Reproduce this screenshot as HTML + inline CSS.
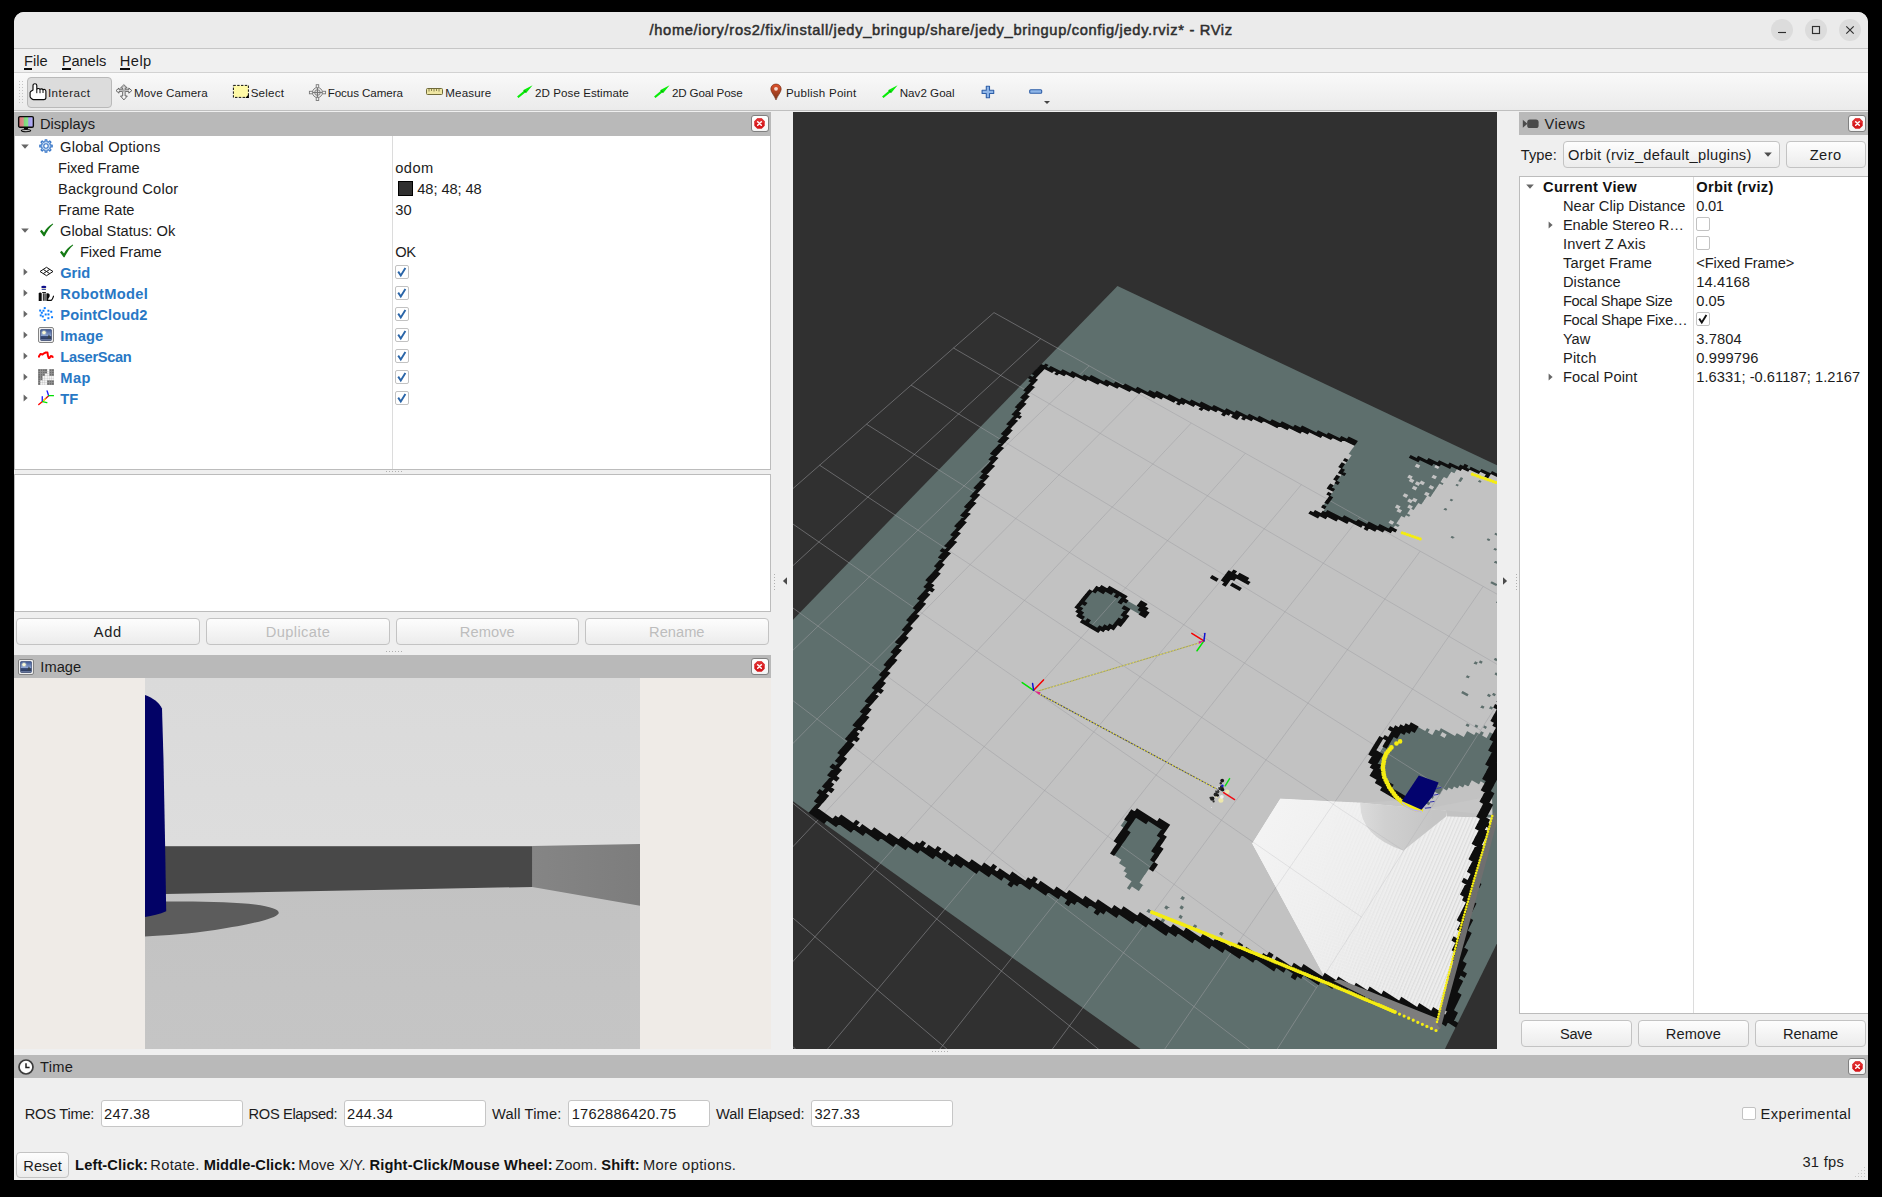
<!DOCTYPE html>
<html lang="en"><head><meta charset="utf-8"><title>RViz</title><style>
html,body{margin:0;padding:0;background:#000;}
body{width:1882px;height:1197px;position:relative;overflow:hidden;font-family:'Liberation Sans', sans-serif;color:#1c1c1c;}
div,span.t,svg{position:absolute;box-sizing:border-box;}
span.t{white-space:pre;line-height:1;}
.btn{border:1px solid #c3c3c3;border-radius:4px;background:linear-gradient(#fdfdfd,#ececec);}
.inp{border:1px solid #c6c6c6;border-radius:3px;background:#fff;}
.hdr{background:#b9b9b9;}
.cb{border:1px solid #c2c2c2;border-radius:2px;background:#fff;}
.xb{border:1px solid #b5b5b5;border-radius:3px;background:linear-gradient(#fcfcfc,#e9e9e9);}
</style></head>
<body>
<div style="left:14px;top:12px;width:1854px;height:1168px;background:#efefef;border-radius:10px 10px 0 0;"></div>
<div style="left:14px;top:12px;width:1854px;height:36px;background:#ebebeb;border-radius:10px 10px 0 0;border-bottom:1px solid #c6c6c6;height:37px;"></div>
<span class="t" style="left:649.50px;top:23.00px;font-size:14.67px;letter-spacing:0.669px;color:#2e2e2e;-webkit-text-stroke:.5px #2e2e2e;">/home/iory/ros2/fix/install/jedy_bringup/share/jedy_bringup/config/jedy.rviz* - RViz</span>
<div style="left:1771px;top:19px;width:22px;height:22px;background:#dcdcdc;border-radius:11px;"></div>
<div style="left:1805px;top:19px;width:22px;height:22px;background:#dcdcdc;border-radius:11px;"></div>
<div style="left:1839px;top:19px;width:22px;height:22px;background:#dcdcdc;border-radius:11px;"></div>
<svg style="left:1770px;top:18px" width="96" height="24" viewBox="1770 18 96 24" fill="none" stroke="#2e2e2e" stroke-width="1.15"><path d="M1778 32.5H1786"/><rect x="1812.5" y="26.5" width="7" height="7"/><path d="M1846.3 26.3L1853.7 33.7M1853.7 26.3L1846.3 33.7"/></svg>
<div style="left:14px;top:49px;width:1854px;height:24px;background:#f0f0f0;border-bottom:1px solid #d2d2d2;"></div>
<span class="t" style="left:23.90px;top:54.00px;font-size:14.67px;letter-spacing:0.069px;">File</span>
<span class="t" style="left:61.70px;top:54.00px;font-size:14.67px;letter-spacing:-0.055px;">Panels</span>
<span class="t" style="left:119.80px;top:54.00px;font-size:14.67px;letter-spacing:0.436px;">Help</span>
<div style="left:24.3px;top:68px;width:7.699999999999999px;height:2px;background:#0c0c0c;"></div>
<div style="left:62.2px;top:68px;width:8.799999999999997px;height:2px;background:#0c0c0c;"></div>
<div style="left:120.3px;top:68px;width:9.700000000000003px;height:2px;background:#0c0c0c;"></div>
<div style="left:14px;top:73px;width:1854px;height:38px;background:linear-gradient(#f9f9f9,#ebebeb);border-bottom:1px solid #bfbfbf;"></div>
<svg style="left:18px;top:80px" width="8" height="26" viewBox="0 0 8 26" fill="#c4c4c4"><rect x="1" y="1" width="1" height="1"/><rect x="4" y="1" width="1" height="1"/><rect x="1" y="4" width="1" height="1"/><rect x="4" y="4" width="1" height="1"/><rect x="1" y="7" width="1" height="1"/><rect x="4" y="7" width="1" height="1"/><rect x="1" y="10" width="1" height="1"/><rect x="4" y="10" width="1" height="1"/><rect x="1" y="13" width="1" height="1"/><rect x="4" y="13" width="1" height="1"/><rect x="1" y="16" width="1" height="1"/><rect x="4" y="16" width="1" height="1"/><rect x="1" y="19" width="1" height="1"/><rect x="4" y="19" width="1" height="1"/><rect x="1" y="22" width="1" height="1"/><rect x="4" y="22" width="1" height="1"/></svg>
<div style="left:27px;top:77px;width:85px;height:31px;background:#dcdcdc;border:1px solid #b9b9b9;border-radius:4px;"></div>
<span class="t" style="left:47.90px;top:87.00px;font-size:11.6px;letter-spacing:0.491px;">Interact</span>
<span class="t" style="left:134.00px;top:87.00px;font-size:11.6px;letter-spacing:0.090px;">Move Camera</span>
<span class="t" style="left:250.70px;top:87.00px;font-size:11.6px;letter-spacing:0.194px;">Select</span>
<span class="t" style="left:327.70px;top:87.00px;font-size:11.6px;letter-spacing:-0.078px;">Focus Camera</span>
<span class="t" style="left:445.20px;top:87.00px;font-size:11.6px;letter-spacing:0.170px;">Measure</span>
<span class="t" style="left:535.10px;top:87.00px;font-size:11.6px;letter-spacing:0.050px;">2D Pose Estimate</span>
<span class="t" style="left:671.90px;top:87.00px;font-size:11.6px;letter-spacing:-0.132px;">2D Goal Pose</span>
<span class="t" style="left:785.90px;top:87.00px;font-size:11.6px;letter-spacing:0.225px;">Publish Point</span>
<span class="t" style="left:899.70px;top:87.00px;font-size:11.6px;letter-spacing:0.024px;">Nav2 Goal</span>
<svg style="left:29px;top:83px" width="18" height="18" viewBox="0 0 18 18"><path d="M4 7V2.400C4 .2 7.800 .2 7.800 2.400V6C8.600 5.200 10.400 5.300 11 6.400C11.800 5.600 13.400 5.800 14 6.800C14.900 6 16.900 6.400 16.900 8.400V14.400C16.900 15.800 16 16.600 14.800 16.600H4.600C3.400 16.600 1.100 14.800 1.100 13.400V9.600C1.100 8.800 2.800 7.600 4 7z" fill="#fff" stroke="#0a0a0a" stroke-width="1.150" stroke-linejoin="round"/><path d="M7.800 6v4.200M11 6.600v3.600M14 7v3" stroke="#0a0a0a" stroke-width="1" fill="none"/></svg>
<svg style="left:115px;top:83px" width="18" height="18" viewBox="0 0 18 18"><path d="M8.900 1.700L12.300 5H10.100V6.800H13.800V5L16.800 7.600 13.800 10.200V8.400H10.100V13H12.300L8.900 16.900 5.500 13H7.700V8.400H4V10.200L1 7.600 4 5V6.800H7.700V5H5.500z" fill="#f6f6f6" stroke="#5c5c5c" stroke-width=".95" stroke-linejoin="round"/><circle cx="8.900" cy="7.600" r="1.700" fill="#b0b0b0"/><path d="M6.600 4.300q2.300-1.200 4.600 0" stroke="#8a8a8a" stroke-width=".8" fill="none"/></svg>
<svg style="left:232px;top:84px" width="18" height="15" viewBox="0 0 18 15"><rect x="1.400" y="1.400" width="15" height="12" fill="#fffaa6" stroke="#111" stroke-width="1" stroke-dasharray="2.400 1.400"/><path d="M16.900 13.900h-3.600l3.600-3.600z" fill="#000"/></svg>
<svg style="left:308px;top:83px" width="19" height="19" viewBox="0 0 19 19" fill="#f4f4f4" stroke="#777" stroke-width=".9"><rect x="8.200" y="1.700" width="2.500" height="15.800"/><rect x="1.400" y="8.300" width="16.200" height="2.500"/><circle cx="9.450" cy="9.550" r="5" fill="#ececec"/><circle cx="9.450" cy="9.550" r="2.800" fill="#e2e2e2"/><path d="M9.450 4.700v9.700M4.600 9.550h9.700" fill="none" stroke-width="1.100"/></svg>
<svg style="left:426px;top:88px" width="18" height="8" viewBox="0 0 18 8"><rect x=".5" y=".5" width="16" height="6" rx="1" fill="#efe6a3" stroke="#6f6a3a"/><path d="M3 1v2.500M5.500 1v2M8 1v2.500M10.500 1v2M13 1v2.500" stroke="#6f6a3a" stroke-width=".8"/></svg>
<svg style="left:516px;top:84px" width="18" height="16" viewBox="0 0 18 16"><path d="M1.100 12.500L7.900 6.800 7 6.200 16.600 1.200 10.200 9 9.300 8.400 2.500 14.100z" fill="#08ec08"/><path d="M7.400 6.500L8.600 6.400 10.100 8.100 9.900 8.800z" fill="#0a6e0a" opacity=".85"/></svg>
<svg style="left:652.8px;top:84px" width="18" height="16" viewBox="0 0 18 16"><path d="M1.100 12.500L7.900 6.800 7 6.200 16.600 1.200 10.200 9 9.300 8.400 2.500 14.100z" fill="#08ec08"/><path d="M7.400 6.500L8.600 6.400 10.100 8.100 9.900 8.800z" fill="#0a6e0a" opacity=".85"/></svg>
<svg style="left:880.8px;top:84px" width="18" height="16" viewBox="0 0 18 16"><path d="M1.100 12.500L7.900 6.800 7 6.200 16.600 1.200 10.200 9 9.300 8.400 2.500 14.100z" fill="#08ec08"/><path d="M7.400 6.500L8.600 6.400 10.100 8.100 9.900 8.800z" fill="#0a6e0a" opacity=".85"/></svg>
<svg style="left:769px;top:83px" width="14" height="18" viewBox="0 0 14 18"><defs><linearGradient id="pg" x1="0" y1="0" x2="0" y2="1"><stop offset="0" stop-color="#e0522c"/><stop offset="1" stop-color="#7a3418"/></linearGradient></defs><path d="M7 1C3.900 1 1.800 3.300 1.800 6.100 1.800 9.300 5.400 12.500 7 17c1.600-4.500 5.200-7.700 5.200-10.900C12.200 3.300 10.100 1 7 1z" fill="url(#pg)" stroke="#6a2a12" stroke-width=".6"/><circle cx="7" cy="5.800" r="1.900" fill="#f6d9cf"/></svg>
<svg style="left:980px;top:85px" width="16" height="15" viewBox="0 0 16 15"><path d="M6.300 1.300h3.200v4h4.200v3.200H9.500v4.200H6.300V8.500H2.100V5.300h4.200z" fill="#8fb6e8" stroke="#2f5fa8" stroke-width="1.100" stroke-linejoin="round"/></svg>
<svg style="left:1028px;top:88px" width="16" height="8" viewBox="0 0 16 8"><rect x="1.700" y="1.700" width="12" height="3.600" rx="1" fill="#8fb6e8" stroke="#2f5fa8" stroke-width="1.100"/></svg>
<svg style="left:1043px;top:100px" width="8" height="5" viewBox="0 0 8 5"><path d="M1 1h6L4 4z" fill="#444"/></svg>
<div class="hdr" style="left:14px;top:112px;width:757px;height:24px;"></div>
<svg style="left:17px;top:115px" width="18" height="18" viewBox="0 0 18 18"><defs><linearGradient id="dg" x1="0" x2="1"><stop offset="0" stop-color="#d87474"/><stop offset=".32" stop-color="#dc8c8c"/><stop offset=".36" stop-color="#78d878"/><stop offset=".64" stop-color="#8ee08e"/><stop offset=".68" stop-color="#a29af0"/><stop offset="1" stop-color="#b8b4f6"/></linearGradient></defs><rect x="1.650" y="1.650" width="14.700" height="10.600" rx="1.300" fill="url(#dg)" stroke="#0a0a0a" stroke-width="1.400"/><path d="M7.300 12.600h3.400l.6 2h-4.600z" fill="#0a0a0a"/><ellipse cx="9" cy="15.600" rx="4.700" ry="1.150" fill="#d0d0d0" stroke="#0a0a0a" stroke-width="1.100"/></svg>
<span class="t" style="left:40.00px;top:117.00px;font-size:14.67px;letter-spacing:-0.036px;">Displays</span>
<div style="left:750.5px;top:115px;width:18px;height:17px;border:1px solid #808080;border-radius:3px;background:linear-gradient(#ffffff,#f4f4f4);"></div>
<svg style="left:754.0px;top:117.7px" width="11" height="11" viewBox="0 0 11 11"><path d="M3.300 .3h4.400l3 3v4.400l-3 3H3.300l-3-3V3.300z" fill="#d6181c"/><path d="M3.300 .3h4.400l3 3v1.600H.3V3.300z" fill="#e84040" opacity=".55"/><path d="M3.700 3.700l3.600 3.600M7.300 3.700L3.700 7.300" stroke="#fff" stroke-width="1.500" stroke-linecap="round"/></svg>
<div style="left:14px;top:136px;width:757px;height:334px;background:#fff;border:1px solid #bcbcbc;border-top:none;"></div>
<div style="left:392px;top:136px;width:1px;height:333px;background:#dcdcdc;"></div>
<svg style="left:21px;top:144.0px" width="8" height="5" viewBox="0 0 8 5"><path d="M.2 .5h7.600L4 4.700z" fill="#666"/></svg>
<svg style="left:37.500px;top:137.500px" width="16" height="16" viewBox="0 0 16 16"><path d="M7.09 3.59L7.11 1.76L8.89 1.76L8.91 3.59L10.47 4.24L11.78 2.96L13.04 4.22L11.76 5.53L12.41 7.09L14.24 7.11L14.24 8.89L12.41 8.91L11.76 10.47L13.04 11.78L11.78 13.04L10.47 11.76L8.91 12.41L8.89 14.24L7.11 14.24L7.09 12.41L5.53 11.76L4.22 13.04L2.96 11.78L4.24 10.47L3.59 8.91L1.76 8.89L1.76 7.11L3.59 7.09L4.24 5.53L2.96 4.22L4.22 2.96L5.53 4.24z" fill="#c6daf2" stroke="#3a78c8" stroke-width="1.150" stroke-linejoin="round"/><circle cx="8" cy="8" r="2.200" fill="#fff" stroke="#3a78c8" stroke-width="1.100"/></svg>
<span class="t" style="left:60.00px;top:140.00px;font-size:14.67px;letter-spacing:0.253px;">Global Options</span>
<span class="t" style="left:58.00px;top:161.00px;font-size:14.67px;letter-spacing:-0.070px;">Fixed Frame</span>
<span class="t" style="left:58.00px;top:182.00px;font-size:14.67px;letter-spacing:0.186px;">Background Color</span>
<span class="t" style="left:58.00px;top:203.00px;font-size:14.67px;letter-spacing:-0.097px;">Frame Rate</span>
<svg style="left:21px;top:228.0px" width="8" height="5" viewBox="0 0 8 5"><path d="M.2 .5h7.600L4 4.700z" fill="#666"/></svg>
<svg style="left:38.5px;top:223px" width="15" height="14" viewBox="0 0 15 14"><path d="M1 8.200L2.700 6.700 5 9.400C7.300 5.600 10 2.700 13.800 .6L14.200 1.200C10.600 4.200 8 8.200 5.600 13.200H4.600z" fill="#147a14"/></svg>
<svg style="left:58.8px;top:244px" width="15" height="14" viewBox="0 0 15 14"><path d="M1 8.200L2.700 6.700 5 9.400C7.300 5.600 10 2.700 13.800 .6L14.200 1.200C10.600 4.200 8 8.200 5.600 13.200H4.600z" fill="#147a14"/></svg>
<span class="t" style="left:60.00px;top:224.00px;font-size:14.67px;letter-spacing:0.025px;">Global Status: Ok</span>
<span class="t" style="left:79.90px;top:245.00px;font-size:14.67px;letter-spacing:-0.061px;">Fixed Frame</span>
<span class="t" style="left:60.30px;top:266.00px;font-size:14.67px;letter-spacing:-0.110px;font-weight:700;color:#2878c5;">Grid</span>
<svg style="left:22.7px;top:268px" width="5" height="8" viewBox="0 0 5 8"><path d="M.6 .4v7.200L4.600 4z" fill="#666"/></svg>
<div class="cb" style="left:395.3px;top:265.2px;width:13.5px;height:13.5px;"></div>
<svg style="left:395.3px;top:265.2px" width="14" height="14" viewBox="0 0 14 14"><path d="M3.200 6.600L5.800 10.500 10.400 3.100" fill="none" stroke="#2a65a8" stroke-width="1.900" stroke-linejoin="miter"/></svg>
<span class="t" style="left:60.30px;top:287.00px;font-size:14.67px;letter-spacing:0.323px;font-weight:700;color:#2878c5;">RobotModel</span>
<svg style="left:22.7px;top:289px" width="5" height="8" viewBox="0 0 5 8"><path d="M.6 .4v7.200L4.600 4z" fill="#666"/></svg>
<div class="cb" style="left:395.3px;top:286.2px;width:13.5px;height:13.5px;"></div>
<svg style="left:395.3px;top:286.2px" width="14" height="14" viewBox="0 0 14 14"><path d="M3.200 6.600L5.800 10.500 10.400 3.100" fill="none" stroke="#2a65a8" stroke-width="1.900" stroke-linejoin="miter"/></svg>
<span class="t" style="left:60.30px;top:308.00px;font-size:14.67px;letter-spacing:0.081px;font-weight:700;color:#2878c5;">PointCloud2</span>
<svg style="left:22.7px;top:310px" width="5" height="8" viewBox="0 0 5 8"><path d="M.6 .4v7.200L4.600 4z" fill="#666"/></svg>
<div class="cb" style="left:395.3px;top:307.2px;width:13.5px;height:13.5px;"></div>
<svg style="left:395.3px;top:307.2px" width="14" height="14" viewBox="0 0 14 14"><path d="M3.200 6.600L5.800 10.500 10.400 3.100" fill="none" stroke="#2a65a8" stroke-width="1.900" stroke-linejoin="miter"/></svg>
<span class="t" style="left:60.30px;top:329.00px;font-size:14.67px;letter-spacing:0.148px;font-weight:700;color:#2878c5;">Image</span>
<svg style="left:22.7px;top:331px" width="5" height="8" viewBox="0 0 5 8"><path d="M.6 .4v7.200L4.600 4z" fill="#666"/></svg>
<div class="cb" style="left:395.3px;top:328.2px;width:13.5px;height:13.5px;"></div>
<svg style="left:395.3px;top:328.2px" width="14" height="14" viewBox="0 0 14 14"><path d="M3.200 6.600L5.800 10.500 10.400 3.100" fill="none" stroke="#2a65a8" stroke-width="1.900" stroke-linejoin="miter"/></svg>
<span class="t" style="left:60.30px;top:350.00px;font-size:14.67px;letter-spacing:-0.327px;font-weight:700;color:#2878c5;">LaserScan</span>
<svg style="left:22.7px;top:352px" width="5" height="8" viewBox="0 0 5 8"><path d="M.6 .4v7.200L4.600 4z" fill="#666"/></svg>
<div class="cb" style="left:395.3px;top:349.2px;width:13.5px;height:13.5px;"></div>
<svg style="left:395.3px;top:349.2px" width="14" height="14" viewBox="0 0 14 14"><path d="M3.200 6.600L5.800 10.500 10.400 3.100" fill="none" stroke="#2a65a8" stroke-width="1.900" stroke-linejoin="miter"/></svg>
<span class="t" style="left:60.30px;top:371.00px;font-size:14.67px;letter-spacing:0.463px;font-weight:700;color:#2878c5;">Map</span>
<svg style="left:22.7px;top:373px" width="5" height="8" viewBox="0 0 5 8"><path d="M.6 .4v7.200L4.600 4z" fill="#666"/></svg>
<div class="cb" style="left:395.3px;top:370.2px;width:13.5px;height:13.5px;"></div>
<svg style="left:395.3px;top:370.2px" width="14" height="14" viewBox="0 0 14 14"><path d="M3.200 6.600L5.800 10.500 10.400 3.100" fill="none" stroke="#2a65a8" stroke-width="1.900" stroke-linejoin="miter"/></svg>
<span class="t" style="left:60.30px;top:392.00px;font-size:14.67px;letter-spacing:0.097px;font-weight:700;color:#2878c5;">TF</span>
<svg style="left:22.7px;top:394px" width="5" height="8" viewBox="0 0 5 8"><path d="M.6 .4v7.200L4.600 4z" fill="#666"/></svg>
<div class="cb" style="left:395.3px;top:391.2px;width:13.5px;height:13.5px;"></div>
<svg style="left:395.3px;top:391.2px" width="14" height="14" viewBox="0 0 14 14"><path d="M3.200 6.600L5.800 10.500 10.400 3.100" fill="none" stroke="#2a65a8" stroke-width="1.900" stroke-linejoin="miter"/></svg>
<span class="t" style="left:395.20px;top:161.00px;font-size:14.67px;letter-spacing:0.457px;">odom</span>
<div style="left:398px;top:181px;width:15px;height:15px;background:#303030;border:1px solid #000;"></div>
<span class="t" style="left:417.30px;top:182.00px;font-size:14.67px;letter-spacing:-0.080px;">48; 48; 48</span>
<span class="t" style="left:395.20px;top:203.00px;font-size:14.67px;letter-spacing:0.144px;">30</span>
<span class="t" style="left:395.20px;top:245.00px;font-size:14.67px;letter-spacing:-0.294px;">OK</span>
<svg style="left:38px;top:264px" width="16" height="16" viewBox="0 0 16 16"><g fill="none" stroke="#111" stroke-width="1" stroke-linejoin="round"><path d="M2 7.500L8.500 3.300 15 7.500 8.500 11.700z"/><path d="M5.250 5.400l6.500 4.200M11.750 5.400L5.250 9.600"/></g></svg>
<svg style="left:38px;top:285px" width="16" height="16" viewBox="0 0 16 16"><ellipse cx="5.800" cy="2" rx="2.600" ry="1.300" fill="#10108c"/><rect x="3.500" y="3.100" width="4.600" height=".8" fill="#efe9c4"/><rect x="3.700" y="3.900" width="4.200" height=".9" fill="#1c2c8c"/><rect x="4.200" y="7" width="3.700" height="1" fill="#1e1e1e"/><path d="M.7 8.600Q1 7.200 2.600 7.400L3.700 8.300V15.900H.7z" fill="#0a0a0a"/><rect x="4.700" y="8.300" width="2" height="7.500" fill="#3c3c3c"/><rect x="6.700" y="8.300" width="1.900" height="7.500" fill="#6a6a6a"/><rect x="4.300" y="8.300" width=".5" height="7.500" fill="#fff"/><path d="M8.600 8.700C10.400 7.700 12 9 11.700 11C11.500 12.500 10.300 13.200 10.100 14.400L10.600 15.900H8.600z" fill="#0a0a0a"/><path d="M9.500 15.400H13C14.200 15.300 14.700 13.600 15.500 11.200" fill="none" stroke="#0a0a0a" stroke-width="1.200" stroke-linecap="round"/></svg>
<svg style="left:38px;top:306px" width="16" height="16" viewBox="0 0 17.500 16.500"><rect x="6.3" y="0.7" width="2.150" height="2.150" fill="#0a7cff"/><rect x="1.3" y="3.4" width="2.150" height="2.150" fill="#0a7cff"/><rect x="4.9" y="3.6" width="2.150" height="2.150" fill="#0a7cff"/><rect x="10.3" y="3.6" width="2.150" height="2.150" fill="#0a7cff"/><rect x="13.4" y="4.7" width="2.150" height="2.150" fill="#0a7cff"/><rect x="3.1" y="5.8" width="2.150" height="2.150" fill="#0a7cff"/><rect x="7.3" y="7.7" width="2.150" height="2.150" fill="#0a7cff"/><rect x="10.4" y="7.6" width="2.150" height="2.150" fill="#0a7cff"/><rect x="1.9" y="8.7" width="2.150" height="2.150" fill="#0a7cff"/><rect x="4.2" y="9.9" width="2.150" height="2.150" fill="#0a7cff"/><rect x="14.3" y="10.7" width="2.150" height="2.150" fill="#0a7cff"/><rect x="10.3" y="11.8" width="2.150" height="2.150" fill="#0a7cff"/><rect x="6.2" y="13.8" width="2.150" height="2.150" fill="#0a7cff"/></svg>
<svg style="left:38px;top:327px" width="16" height="16" viewBox="0 0 16 16"><rect x=".6" y=".6" width="14.800" height="14.800" rx="1.300" fill="#fdfdfd" stroke="#777" stroke-width="1"/><defs><linearGradient id="ig" x1="0" y1="0" x2="0" y2="1"><stop offset="0" stop-color="#3a5490"/><stop offset=".58" stop-color="#90a8d4"/><stop offset=".62" stop-color="#3c507c"/><stop offset=".85" stop-color="#2c3c62"/><stop offset=".9" stop-color="#6a7aa0"/><stop offset="1" stop-color="#2c3c62"/></linearGradient></defs><rect x="2.500" y="2.500" width="11" height="11" rx=".8" fill="url(#ig)" stroke="#2a3a66" stroke-width=".6"/><circle cx="6" cy="5.600" r="1.700" fill="#fdfbd8"/><circle cx="6" cy="5.600" r="2.500" fill="#fdfbd8" opacity=".35"/><path d="M9.600 10.600l1.300-3.400 1.700 3.400.4.800h-3.800z" fill="#39434a"/></svg>
<svg style="left:38px;top:348px" width="16" height="16" viewBox="0 0 16.500 14"><path d="M1 8.600V7.200l1.700-2.400 2 .6 1.500-1.200L8 3.400h1.800l.4 3.200.9 2.600.8-.2 1.300-2 1.700.4.300 1.600" fill="none" stroke="#ff0000" stroke-width="2" stroke-linejoin="round"/></svg>
<svg style="left:38px;top:369px" width="16" height="16" viewBox="0 0 16 16"><rect x="0.15" y="0.15" width="2.250" height="2.250" fill="#6e6e6e" stroke="#8c8c8c" stroke-width=".250" stroke-opacity=".5"/><rect x="2.40" y="0.15" width="2.250" height="2.250" fill="#6e6e6e" stroke="#8c8c8c" stroke-width=".250" stroke-opacity=".5"/><rect x="4.65" y="0.15" width="2.250" height="2.250" fill="#6e6e6e" stroke="#8c8c8c" stroke-width=".250" stroke-opacity=".5"/><rect x="6.90" y="0.15" width="2.250" height="2.250" fill="#6e6e6e" stroke="#8c8c8c" stroke-width=".250" stroke-opacity=".5"/><rect x="9.15" y="0.15" width="2.250" height="2.250" fill="#fff" stroke="#8c8c8c" stroke-width=".250" stroke-opacity=".5"/><rect x="11.40" y="0.15" width="2.250" height="2.250" fill="#6e6e6e" stroke="#8c8c8c" stroke-width=".250" stroke-opacity=".5"/><rect x="13.65" y="0.15" width="2.250" height="2.250" fill="#6e6e6e" stroke="#8c8c8c" stroke-width=".250" stroke-opacity=".5"/><rect x="0.15" y="2.40" width="2.250" height="2.250" fill="#6e6e6e" stroke="#8c8c8c" stroke-width=".250" stroke-opacity=".5"/><rect x="2.40" y="2.40" width="2.250" height="2.250" fill="#6e6e6e" stroke="#8c8c8c" stroke-width=".250" stroke-opacity=".5"/><rect x="4.65" y="2.40" width="2.250" height="2.250" fill="#6e6e6e" stroke="#8c8c8c" stroke-width=".250" stroke-opacity=".5"/><rect x="6.90" y="2.40" width="2.250" height="2.250" fill="#6e6e6e" stroke="#8c8c8c" stroke-width=".250" stroke-opacity=".5"/><rect x="9.15" y="2.40" width="2.250" height="2.250" fill="#f4f4f4" stroke="#8c8c8c" stroke-width=".250" stroke-opacity=".5"/><rect x="11.40" y="2.40" width="2.250" height="2.250" fill="#6e6e6e" stroke="#8c8c8c" stroke-width=".250" stroke-opacity=".5"/><rect x="13.65" y="2.40" width="2.250" height="2.250" fill="#6e6e6e" stroke="#8c8c8c" stroke-width=".250" stroke-opacity=".5"/><rect x="0.15" y="4.65" width="2.250" height="2.250" fill="#6e6e6e" stroke="#8c8c8c" stroke-width=".250" stroke-opacity=".5"/><rect x="2.40" y="4.65" width="2.250" height="2.250" fill="#6e6e6e" stroke="#8c8c8c" stroke-width=".250" stroke-opacity=".5"/><rect x="4.65" y="4.65" width="2.250" height="2.250" fill="#6e6e6e" stroke="#8c8c8c" stroke-width=".250" stroke-opacity=".5"/><rect x="6.90" y="4.65" width="2.250" height="2.250" fill="#f4f4f4" stroke="#8c8c8c" stroke-width=".250" stroke-opacity=".5"/><rect x="9.15" y="4.65" width="2.250" height="2.250" fill="#f4f4f4" stroke="#8c8c8c" stroke-width=".250" stroke-opacity=".5"/><rect x="11.40" y="4.65" width="2.250" height="2.250" fill="#6e6e6e" stroke="#8c8c8c" stroke-width=".250" stroke-opacity=".5"/><rect x="13.65" y="4.65" width="2.250" height="2.250" fill="#6e6e6e" stroke="#8c8c8c" stroke-width=".250" stroke-opacity=".5"/><rect x="0.15" y="6.90" width="2.250" height="2.250" fill="#6e6e6e" stroke="#8c8c8c" stroke-width=".250" stroke-opacity=".5"/><rect x="2.40" y="6.90" width="2.250" height="2.250" fill="#6e6e6e" stroke="#8c8c8c" stroke-width=".250" stroke-opacity=".5"/><rect x="4.65" y="6.90" width="2.250" height="2.250" fill="#f4f4f4" stroke="#8c8c8c" stroke-width=".250" stroke-opacity=".5"/><rect x="6.90" y="6.90" width="2.250" height="2.250" fill="#f4f4f4" stroke="#8c8c8c" stroke-width=".250" stroke-opacity=".5"/><rect x="9.15" y="6.90" width="2.250" height="2.250" fill="#f4f4f4" stroke="#8c8c8c" stroke-width=".250" stroke-opacity=".5"/><rect x="11.40" y="6.90" width="2.250" height="2.250" fill="#f4f4f4" stroke="#8c8c8c" stroke-width=".250" stroke-opacity=".5"/><rect x="13.65" y="6.90" width="2.250" height="2.250" fill="#f4f4f4" stroke="#8c8c8c" stroke-width=".250" stroke-opacity=".5"/><rect x="0.15" y="9.15" width="2.250" height="2.250" fill="#6e6e6e" stroke="#8c8c8c" stroke-width=".250" stroke-opacity=".5"/><rect x="2.40" y="9.15" width="2.250" height="2.250" fill="#6e6e6e" stroke="#8c8c8c" stroke-width=".250" stroke-opacity=".5"/><rect x="4.65" y="9.15" width="2.250" height="2.250" fill="#f4f4f4" stroke="#8c8c8c" stroke-width=".250" stroke-opacity=".5"/><rect x="6.90" y="9.15" width="2.250" height="2.250" fill="#f4f4f4" stroke="#8c8c8c" stroke-width=".250" stroke-opacity=".5"/><rect x="9.15" y="9.15" width="2.250" height="2.250" fill="#f4f4f4" stroke="#8c8c8c" stroke-width=".250" stroke-opacity=".5"/><rect x="11.40" y="9.15" width="2.250" height="2.250" fill="#f4f4f4" stroke="#8c8c8c" stroke-width=".250" stroke-opacity=".5"/><rect x="13.65" y="9.15" width="2.250" height="2.250" fill="#f4f4f4" stroke="#8c8c8c" stroke-width=".250" stroke-opacity=".5"/><rect x="0.15" y="11.40" width="2.250" height="2.250" fill="#6e6e6e" stroke="#8c8c8c" stroke-width=".250" stroke-opacity=".5"/><rect x="2.40" y="11.40" width="2.250" height="2.250" fill="#f4f4f4" stroke="#8c8c8c" stroke-width=".250" stroke-opacity=".5"/><rect x="4.65" y="11.40" width="2.250" height="2.250" fill="#f4f4f4" stroke="#8c8c8c" stroke-width=".250" stroke-opacity=".5"/><rect x="6.90" y="11.40" width="2.250" height="2.250" fill="#f4f4f4" stroke="#8c8c8c" stroke-width=".250" stroke-opacity=".5"/><rect x="9.15" y="11.40" width="2.250" height="2.250" fill="#6e6e6e" stroke="#8c8c8c" stroke-width=".250" stroke-opacity=".5"/><rect x="11.40" y="11.40" width="2.250" height="2.250" fill="#6e6e6e" stroke="#8c8c8c" stroke-width=".250" stroke-opacity=".5"/><rect x="13.65" y="11.40" width="2.250" height="2.250" fill="#6e6e6e" stroke="#8c8c8c" stroke-width=".250" stroke-opacity=".5"/><rect x="0.15" y="13.65" width="2.250" height="2.250" fill="#6e6e6e" stroke="#8c8c8c" stroke-width=".250" stroke-opacity=".5"/><rect x="2.40" y="13.65" width="2.250" height="2.250" fill="#f4f4f4" stroke="#8c8c8c" stroke-width=".250" stroke-opacity=".5"/><rect x="4.65" y="13.65" width="2.250" height="2.250" fill="#f4f4f4" stroke="#8c8c8c" stroke-width=".250" stroke-opacity=".5"/><rect x="6.90" y="13.65" width="2.250" height="2.250" fill="#f4f4f4" stroke="#8c8c8c" stroke-width=".250" stroke-opacity=".5"/><rect x="9.15" y="13.65" width="2.250" height="2.250" fill="#6e6e6e" stroke="#8c8c8c" stroke-width=".250" stroke-opacity=".5"/><rect x="11.40" y="13.65" width="2.250" height="2.250" fill="#6e6e6e" stroke="#8c8c8c" stroke-width=".250" stroke-opacity=".5"/><rect x="13.65" y="13.65" width="2.250" height="2.250" fill="#6e6e6e" stroke="#8c8c8c" stroke-width=".250" stroke-opacity=".5"/></svg>
<svg style="left:38px;top:390px" width="16" height="16" viewBox="0 0 16.500 16"><g fill="none" stroke-width="1.400" stroke-linecap="round"><path d="M.8 14.800L4.600 11.600" stroke="#ff0000"/><path d="M4.600 11.600L11 5.600" stroke="#e01010"/><path d="M5.500 10.800l2-1.800" stroke="#ffe000"/><path d="M4.400 11.200V6.600" stroke="#1a1aff"/><path d="M4.800 11.700l4.300 1.100" stroke="#00e000"/><path d="M11 5.600L9.400 .8" stroke="#1a1aff"/><path d="M11 5.600h5" stroke="#00e000"/></g></svg>
<svg style="left:386px;top:471px" width="18" height="2" viewBox="0 0 18 2" fill="#b0b0b0"><rect x="0" y="0" width="1" height="1"/><rect x="3" y="0" width="1" height="1"/><rect x="6" y="0" width="1" height="1"/><rect x="9" y="0" width="1" height="1"/><rect x="12" y="0" width="1" height="1"/><rect x="15" y="0" width="1" height="1"/></svg>
<div style="left:14px;top:474px;width:757px;height:138px;background:#fff;border:1px solid #bcbcbc;"></div>
<div class="btn" style="left:16px;top:618px;width:184px;height:27px;"></div>
<span class="t" style="left:93.80px;top:625.00px;font-size:14.67px;letter-spacing:0.674px;">Add</span>
<div class="btn" style="left:206px;top:618px;width:184px;height:27px;"></div>
<span class="t" style="left:265.70px;top:625.00px;font-size:14.67px;letter-spacing:0.388px;color:#bdbdbd;">Duplicate</span>
<div class="btn" style="left:396px;top:618px;width:183px;height:27px;"></div>
<span class="t" style="left:459.80px;top:625.00px;font-size:14.67px;letter-spacing:0.070px;color:#bdbdbd;">Remove</span>
<div class="btn" style="left:585px;top:618px;width:184px;height:27px;"></div>
<span class="t" style="left:649.10px;top:625.00px;font-size:14.67px;letter-spacing:-0.001px;color:#bdbdbd;">Rename</span>
<svg style="left:386px;top:651px" width="18" height="2" viewBox="0 0 18 2" fill="#b0b0b0"><rect x="0" y="0" width="1" height="1"/><rect x="3" y="0" width="1" height="1"/><rect x="6" y="0" width="1" height="1"/><rect x="9" y="0" width="1" height="1"/><rect x="12" y="0" width="1" height="1"/><rect x="15" y="0" width="1" height="1"/></svg>
<div class="hdr" style="left:14px;top:655px;width:757px;height:23px;"></div>
<svg style="left:18px;top:659px" width="16" height="16" viewBox="0 0 16 16"><rect x=".6" y=".6" width="14.800" height="14.800" rx="1.300" fill="#fdfdfd" stroke="#777" stroke-width="1"/><defs><linearGradient id="ig2" x1="0" y1="0" x2="0" y2="1"><stop offset="0" stop-color="#3a5490"/><stop offset=".58" stop-color="#90a8d4"/><stop offset=".62" stop-color="#3c507c"/><stop offset=".85" stop-color="#2c3c62"/><stop offset=".9" stop-color="#6a7aa0"/><stop offset="1" stop-color="#2c3c62"/></linearGradient></defs><rect x="2.500" y="2.500" width="11" height="11" rx=".8" fill="url(#ig2)" stroke="#2a3a66" stroke-width=".6"/><circle cx="6" cy="5.600" r="1.700" fill="#fdfbd8"/><circle cx="6" cy="5.600" r="2.500" fill="#fdfbd8" opacity=".35"/><path d="M9.600 10.600l1.300-3.400 1.700 3.400.4.800h-3.800z" fill="#39434a"/></svg>
<span class="t" style="left:40.30px;top:660.00px;font-size:14.67px;letter-spacing:0.033px;">Image</span>
<div style="left:750.5px;top:658px;width:18px;height:17px;border:1px solid #808080;border-radius:3px;background:linear-gradient(#ffffff,#f4f4f4);"></div>
<svg style="left:754.0px;top:660.7px" width="11" height="11" viewBox="0 0 11 11"><path d="M3.300 .3h4.400l3 3v4.400l-3 3H3.300l-3-3V3.300z" fill="#d6181c"/><path d="M3.300 .3h4.400l3 3v1.600H.3V3.300z" fill="#e84040" opacity=".55"/><path d="M3.700 3.700l3.600 3.600M7.300 3.700L3.700 7.300" stroke="#fff" stroke-width="1.500" stroke-linecap="round"/></svg>
<div style="left:14px;top:678px;width:757px;height:371px;background:#efebe7;"></div>
<svg style="left:782px;top:575.500px" width="6" height="10" viewBox="0 0 6 10"><path d="M5 1.200v7.600L.9 5z" fill="#4a4a4a"/></svg>
<svg style="left:774px;top:574px" width="2" height="18" viewBox="0 0 2 18" fill="#b0b0b0"><rect x="0" y="0" width="1" height="1"/><rect x="0" y="3" width="1" height="1"/><rect x="0" y="6" width="1" height="1"/><rect x="0" y="9" width="1" height="1"/><rect x="0" y="12" width="1" height="1"/><rect x="0" y="15" width="1" height="1"/></svg>
<svg style="left:1516px;top:574px" width="2" height="18" viewBox="0 0 2 18" fill="#b0b0b0"><rect x="0" y="0" width="1" height="1"/><rect x="0" y="3" width="1" height="1"/><rect x="0" y="6" width="1" height="1"/><rect x="0" y="9" width="1" height="1"/><rect x="0" y="12" width="1" height="1"/><rect x="0" y="15" width="1" height="1"/></svg>
<svg style="left:1502px;top:575.500px" width="6" height="10" viewBox="0 0 6 10"><path d="M1 1.200v7.600L5.100 5z" fill="#4a4a4a"/></svg>
<svg style="left:932px;top:1051px" width="18" height="2" viewBox="0 0 18 2" fill="#b0b0b0"><rect x="0" y="0" width="1" height="1"/><rect x="3" y="0" width="1" height="1"/><rect x="6" y="0" width="1" height="1"/><rect x="9" y="0" width="1" height="1"/><rect x="12" y="0" width="1" height="1"/><rect x="15" y="0" width="1" height="1"/></svg>
<div class="hdr" style="left:1519px;top:112px;width:349px;height:23px;"></div>
<svg style="left:1522px;top:119px" width="18" height="10" viewBox="0 0 18 10"><path d="M.8 .8L5.400 4.700.8 8.800z" fill="#4a4a4a"/><rect x="5.200" y=".6" width="11.400" height="8.400" rx="2.600" fill="#4a4a4a"/></svg>
<span class="t" style="left:1544.50px;top:117.00px;font-size:14.67px;letter-spacing:0.411px;">Views</span>
<div style="left:1848px;top:115px;width:18px;height:17px;border:1px solid #808080;border-radius:3px;background:linear-gradient(#ffffff,#f4f4f4);"></div>
<svg style="left:1851.5px;top:117.7px" width="11" height="11" viewBox="0 0 11 11"><path d="M3.300 .3h4.400l3 3v4.400l-3 3H3.300l-3-3V3.300z" fill="#d6181c"/><path d="M3.300 .3h4.400l3 3v1.600H.3V3.300z" fill="#e84040" opacity=".55"/><path d="M3.700 3.700l3.600 3.600M7.300 3.700L3.700 7.300" stroke="#fff" stroke-width="1.500" stroke-linecap="round"/></svg>
<span class="t" style="left:1520.80px;top:148.00px;font-size:14.67px;letter-spacing:0.048px;">Type:</span>
<div class="btn" style="left:1563px;top:141px;width:217px;height:27px;"></div>
<span class="t" style="left:1568.10px;top:148.00px;font-size:14.67px;letter-spacing:0.302px;">Orbit (rviz_default_plugins)</span>
<svg style="left:1764.4px;top:152.3px" width="8" height="5" viewBox="0 0 8 5"><path d="M.2 .5h7.600L4 4.700z" fill="#4d4d4d"/></svg>
<div class="btn" style="left:1786px;top:141px;width:80px;height:27px;"></div>
<span class="t" style="left:1809.70px;top:148.00px;font-size:14.67px;letter-spacing:0.465px;">Zero</span>
<div style="left:1519px;top:176px;width:349px;height:838px;background:#fff;border:1px solid #bcbcbc;border-right:none;"></div>
<div style="left:1693px;top:177px;width:1px;height:836px;background:#dcdcdc;"></div>
<svg style="left:1526px;top:183.8px" width="8" height="5" viewBox="0 0 8 5"><path d="M.2 .5h7.600L4 4.700z" fill="#666"/></svg>
<span class="t" style="left:1543.00px;top:180.00px;font-size:14.67px;letter-spacing:0.322px;font-weight:700;color:#111;">Current View</span>
<span class="t" style="left:1696.30px;top:180.00px;font-size:14.67px;letter-spacing:0.266px;font-weight:700;color:#111;">Orbit (rviz)</span>
<span class="t" style="left:1562.90px;top:199.00px;font-size:14.67px;letter-spacing:0.023px;">Near Clip Distance</span>
<span class="t" style="left:1562.90px;top:218.00px;font-size:14.67px;letter-spacing:-0.081px;">Enable Stereo R…</span>
<span class="t" style="left:1562.90px;top:237.00px;font-size:14.67px;letter-spacing:0.166px;">Invert Z Axis</span>
<span class="t" style="left:1562.90px;top:256.00px;font-size:14.67px;letter-spacing:0.179px;">Target Frame</span>
<span class="t" style="left:1562.90px;top:275.00px;font-size:14.67px;letter-spacing:0.121px;">Distance</span>
<span class="t" style="left:1562.90px;top:294.00px;font-size:14.67px;letter-spacing:-0.336px;">Focal Shape Size</span>
<span class="t" style="left:1562.90px;top:313.00px;font-size:14.67px;letter-spacing:-0.242px;">Focal Shape Fixe…</span>
<span class="t" style="left:1562.90px;top:332.00px;font-size:14.67px;letter-spacing:0.021px;">Yaw</span>
<span class="t" style="left:1562.90px;top:351.00px;font-size:14.67px;letter-spacing:0.221px;">Pitch</span>
<span class="t" style="left:1562.90px;top:370.00px;font-size:14.67px;letter-spacing:0.116px;">Focal Point</span>
<span class="t" style="left:1696.30px;top:199.00px;font-size:14.67px;letter-spacing:-0.308px;">0.01</span>
<span class="t" style="left:1696.30px;top:256.00px;font-size:14.67px;letter-spacing:-0.121px;">&lt;Fixed Frame&gt;</span>
<span class="t" style="left:1696.30px;top:275.00px;font-size:14.67px;letter-spacing:0.117px;">14.4168</span>
<span class="t" style="left:1696.30px;top:294.00px;font-size:14.67px;letter-spacing:-0.008px;">0.05</span>
<span class="t" style="left:1696.30px;top:332.00px;font-size:14.67px;letter-spacing:0.095px;">3.7804</span>
<span class="t" style="left:1696.30px;top:351.00px;font-size:14.67px;letter-spacing:0.157px;">0.999796</span>
<span class="t" style="left:1696.30px;top:370.00px;font-size:14.67px;letter-spacing:0.045px;">1.6331; -0.61187; 1.2167</span>
<svg style="left:1547.5px;top:220.5px" width="5" height="8" viewBox="0 0 5 8"><path d="M.6 .4v7.200L4.600 4z" fill="#666"/></svg>
<svg style="left:1547.5px;top:372.5px" width="5" height="8" viewBox="0 0 5 8"><path d="M.6 .4v7.200L4.600 4z" fill="#666"/></svg>
<div class="cb" style="left:1696.2px;top:217.4px;width:13.5px;height:13.5px;"></div>
<div class="cb" style="left:1696.2px;top:236.4px;width:13.5px;height:13.5px;"></div>
<div class="cb" style="left:1696.2px;top:312.4px;width:13.5px;height:13.5px;"></div>
<svg style="left:1696.2px;top:312.4px" width="14" height="14" viewBox="0 0 14 14"><path d="M3.200 6.600L5.800 10.500 10.400 3.100" fill="none" stroke="#111" stroke-width="1.900" stroke-linejoin="miter"/></svg>
<div class="btn" style="left:1521px;top:1020px;width:111px;height:27px;"></div>
<span class="t" style="left:1560.00px;top:1027.00px;font-size:14.67px;letter-spacing:-0.352px;">Save</span>
<div class="btn" style="left:1638px;top:1020px;width:111px;height:27px;"></div>
<span class="t" style="left:1665.70px;top:1027.00px;font-size:14.67px;letter-spacing:0.104px;">Remove</span>
<div class="btn" style="left:1755px;top:1020px;width:111px;height:27px;"></div>
<span class="t" style="left:1782.90px;top:1027.00px;font-size:14.67px;letter-spacing:-0.034px;">Rename</span>
<div class="hdr" style="left:14px;top:1055px;width:1854px;height:23px;"></div>
<svg style="left:17px;top:1058px" width="18" height="18" viewBox="0 0 18 18"><circle cx="9" cy="9" r="7" fill="#fff" stroke="#3c3c3c" stroke-width="1.700"/><path d="M9 5.200V9.600H12.600" fill="none" stroke="#222" stroke-width="1.500"/></svg>
<span class="t" style="left:39.90px;top:1060.00px;font-size:14.67px;letter-spacing:0.367px;">Time</span>
<div style="left:1848px;top:1058px;width:18px;height:17px;border:1px solid #808080;border-radius:3px;background:linear-gradient(#ffffff,#f4f4f4);"></div>
<svg style="left:1851.5px;top:1060.7px" width="11" height="11" viewBox="0 0 11 11"><path d="M3.300 .3h4.400l3 3v4.400l-3 3H3.300l-3-3V3.300z" fill="#d6181c"/><path d="M3.300 .3h4.400l3 3v1.600H.3V3.300z" fill="#e84040" opacity=".55"/><path d="M3.700 3.700l3.600 3.600M7.300 3.700L3.700 7.300" stroke="#fff" stroke-width="1.500" stroke-linecap="round"/></svg>
<span class="t" style="left:24.70px;top:1107.00px;font-size:14.67px;letter-spacing:-0.241px;">ROS Time:</span>
<div class="inp" style="left:101px;top:1100px;width:142px;height:27px;"></div>
<span class="t" style="left:104.10px;top:1107.00px;font-size:14.67px;letter-spacing:0.179px;">247.38</span>
<span class="t" style="left:248.60px;top:1107.00px;font-size:14.67px;letter-spacing:-0.348px;">ROS Elapsed:</span>
<div class="inp" style="left:344px;top:1100px;width:142px;height:27px;"></div>
<span class="t" style="left:347.10px;top:1107.00px;font-size:14.67px;letter-spacing:0.195px;">244.34</span>
<span class="t" style="left:492.00px;top:1107.00px;font-size:14.67px;letter-spacing:0.164px;">Wall Time:</span>
<div class="inp" style="left:568px;top:1100px;width:142px;height:27px;"></div>
<span class="t" style="left:571.70px;top:1107.00px;font-size:14.67px;letter-spacing:0.208px;">1762886420.75</span>
<span class="t" style="left:715.90px;top:1107.00px;font-size:14.67px;letter-spacing:-0.028px;">Wall Elapsed:</span>
<div class="inp" style="left:811px;top:1100px;width:142px;height:27px;"></div>
<span class="t" style="left:814.50px;top:1107.00px;font-size:14.67px;letter-spacing:0.095px;">327.33</span>
<div class="cb" style="left:1742px;top:1106.5px;width:13.5px;height:13.5px;"></div>
<span class="t" style="left:1760.60px;top:1107.00px;font-size:14.67px;letter-spacing:0.429px;">Experimental</span>
<div class="btn" style="left:16px;top:1152px;width:53px;height:26px;"></div>
<span class="t" style="left:23.30px;top:1159.00px;font-size:14.67px;letter-spacing:0.041px;">Reset</span>
<span class="t" style="left:75.10px;top:1158.00px;font-size:14.67px;letter-spacing:0.103px;font-weight:700;color:#111;">Left-Click:</span>
<span class="t" style="left:150.30px;top:1158.00px;font-size:14.67px;letter-spacing:0.305px;">Rotate.</span>
<span class="t" style="left:203.70px;top:1158.00px;font-size:14.67px;letter-spacing:0.054px;font-weight:700;color:#111;">Middle-Click:</span>
<span class="t" style="left:298.30px;top:1158.00px;font-size:14.67px;letter-spacing:0.187px;">Move X/Y.</span>
<span class="t" style="left:369.50px;top:1158.00px;font-size:14.67px;letter-spacing:0.139px;font-weight:700;color:#111;">Right-Click/Mouse Wheel:</span>
<span class="t" style="left:555.20px;top:1158.00px;font-size:14.67px;letter-spacing:0.131px;">Zoom.</span>
<span class="t" style="left:601.20px;top:1158.00px;font-size:14.67px;letter-spacing:0.208px;font-weight:700;color:#111;">Shift:</span>
<span class="t" style="left:642.90px;top:1158.00px;font-size:14.67px;letter-spacing:0.354px;">More options.</span>
<span class="t" style="left:1802.40px;top:1155.00px;font-size:14.67px;letter-spacing:0.310px;">31 fps</span>
<svg style="left:1853px;top:1165px" width="14" height="14" viewBox="0 0 14 14" fill="#c6c6c6"><rect x="11" y="11" width="1" height="1"/><rect x="11" y="8" width="1" height="1"/><rect x="11" y="5" width="1" height="1"/><rect x="11" y="2" width="1" height="1"/><rect x="8" y="11" width="1" height="1"/><rect x="8" y="8" width="1" height="1"/><rect x="8" y="5" width="1" height="1"/><rect x="5" y="11" width="1" height="1"/><rect x="5" y="8" width="1" height="1"/><rect x="2" y="11" width="1" height="1"/></svg>
<svg style="left:793px;top:112px" width="704" height="937" viewBox="0 0 704 937"><rect width="704" height="937" fill="#303030"/><polygon fill="#5e6f6d" points="324.5,174.0 -104.3,614.9 572.8,1097.6 895.1,443.5"/><path fill="#c2c2c2" d="M697.6 361.3L695.8 364.0L743.6 386.8L745.3 384.0zM686.9 359.0L685.2 361.8L692.1 365.1L693.8 362.3zM696.2 363.5L694.4 366.2L745.5 390.6L747.2 387.7zM676.3 356.8L674.5 359.6L744.1 392.8L745.8 390.0zM668.7 356.1L667.0 358.8L742.7 395.1L744.4 392.3zM664.2 356.8L662.5 359.6L684.7 370.2L686.5 367.5zM688.8 368.6L687.1 371.4L741.4 397.4L743.1 394.6zM662.8 359.0L661.0 361.8L743.2 401.3L744.9 398.4zM643.1 352.5L641.3 355.2L645.0 357.0L646.9 354.3zM658.3 359.8L656.5 362.5L666.4 367.3L668.2 364.5zM670.6 365.6L668.8 368.4L741.8 403.6L743.5 400.7zM656.8 362.0L655.0 364.7L665.0 369.5L666.8 366.7zM669.1 367.9L667.3 370.6L740.5 405.9L742.2 403.0zM655.4 364.2L653.6 366.9L742.3 409.8L744.0 406.9zM623.6 351.7L621.7 354.4L625.5 356.2L627.3 353.5zM650.9 364.9L649.1 367.6L662.1 373.9L663.9 371.2zM666.2 372.3L664.4 375.1L740.9 412.1L742.6 409.2zM640.3 362.7L638.4 365.4L642.2 367.2L644.0 364.5zM649.4 367.1L647.6 369.9L739.5 414.4L741.2 411.5zM651.0 370.8L649.2 373.6L738.1 416.8L739.9 413.9zM646.5 371.5L644.6 374.3L740.0 420.7L741.7 417.8zM549.6 327.4L547.6 330.0L560.0 336.0L561.9 333.4zM645.0 373.8L643.1 376.5L738.6 423.1L740.3 420.1zM539.3 325.2L537.4 327.9L558.4 338.1L560.3 335.5zM616.1 362.7L614.2 365.4L618.0 367.2L619.8 364.5zM628.2 368.6L626.3 371.3L630.1 373.2L632.0 370.4zM637.4 373.0L635.5 375.8L639.3 377.7L641.2 374.9zM643.5 376.0L641.6 378.8L737.2 425.4L738.9 422.5zM529.1 323.1L527.1 325.7L556.8 340.3L558.8 337.6zM617.6 366.3L615.7 369.1L619.5 370.9L621.4 368.2zM623.7 369.3L621.8 372.1L625.6 373.9L627.4 371.1zM642.0 378.3L640.2 381.0L656.4 389.0L658.2 386.1zM660.5 387.3L658.7 390.1L735.8 427.8L737.5 424.9zM516.0 319.6L514.1 322.2L555.3 342.4L557.2 339.8zM640.5 380.5L638.7 383.3L737.6 431.8L739.4 428.8zM508.7 318.9L506.7 321.5L556.6 346.0L558.6 343.3zM620.6 373.8L618.8 376.5L622.6 378.4L624.4 375.6zM632.9 379.7L631.0 382.5L634.8 384.4L636.7 381.6zM639.0 382.8L637.2 385.6L736.2 434.2L738.0 431.2zM495.8 315.4L493.7 318.0L555.1 348.2L557.0 345.5zM634.4 383.5L632.6 386.3L734.8 436.6L736.6 433.6zM485.7 313.4L483.6 315.9L550.5 348.9L552.5 346.2zM632.9 385.8L631.1 388.6L650.4 398.1L652.3 395.3zM654.6 396.4L652.8 399.3L701.0 423.0L702.8 420.1zM705.2 421.3L703.4 424.2L736.7 440.6L738.4 437.6zM470.0 308.5L467.9 311.1L551.9 352.5L553.9 349.8zM631.4 388.0L629.5 390.9L735.3 443.0L737.0 440.0zM460.0 306.4L457.9 309.0L547.4 353.2L549.3 350.5zM611.5 381.2L609.6 384.0L613.4 385.9L615.3 383.1zM620.7 385.8L618.8 388.6L622.6 390.5L624.5 387.6zM629.9 390.3L628.0 393.1L733.8 445.5L735.6 442.5zM447.2 303.0L445.1 305.6L448.5 307.3L450.6 304.7zM452.7 305.8L450.7 308.3L545.8 355.4L547.7 352.7zM616.1 386.5L614.2 389.3L618.0 391.2L619.9 388.4zM625.3 391.1L623.4 393.9L693.4 428.6L695.2 425.6zM697.7 426.8L695.9 429.8L732.4 447.9L734.2 444.9zM437.2 301.0L435.1 303.5L438.6 305.2L440.6 302.7zM445.5 305.1L443.4 307.6L547.1 359.1L549.1 356.4zM623.8 393.3L621.9 396.2L734.3 452.0L736.0 448.9zM424.5 297.6L422.4 300.1L428.6 303.1L430.7 300.6zM432.8 301.6L430.7 304.2L545.5 361.3L547.5 358.6zM616.1 392.6L614.2 395.4L618.0 397.3L619.9 394.5zM622.3 395.6L620.3 398.5L700.2 438.2L702.0 435.2zM704.4 436.4L702.6 439.4L732.9 454.4L734.6 451.4zM417.4 296.9L415.3 299.4L546.9 365.0L548.9 362.2zM617.6 396.4L615.7 399.2L731.4 456.9L733.2 453.8zM402.1 292.1L399.9 294.6L406.0 297.7L408.1 295.2zM410.2 296.2L408.1 298.7L542.3 365.7L544.3 362.9zM603.8 392.6L601.9 395.4L605.7 397.3L607.6 394.5zM616.1 398.7L614.2 401.6L733.3 461.0L735.1 457.9zM392.2 290.1L390.1 292.6L540.7 367.9L542.7 365.2zM605.3 396.4L603.4 399.2L607.2 401.1L609.1 398.3zM617.6 402.5L615.7 405.4L657.2 426.2L659.1 423.2zM661.5 424.4L659.7 427.4L731.9 463.5L733.6 460.4zM382.4 288.1L380.3 290.6L383.6 292.2L385.8 289.7zM387.8 290.8L385.6 293.3L542.0 371.6L544.0 368.8zM613.0 403.3L611.1 406.2L700.8 451.1L702.6 448.1zM705.1 449.3L703.3 452.4L730.4 466.0L732.2 462.9zM370.0 284.7L367.8 287.2L540.4 373.8L542.4 371.1zM608.3 404.1L606.4 406.9L729.0 468.4L730.8 465.4zM362.9 284.1L360.7 286.5L535.8 374.6L537.8 371.8zM606.8 406.4L604.8 409.3L730.8 472.6L732.6 469.5zM347.8 279.4L345.6 281.9L534.2 376.8L536.2 374.0zM605.2 408.7L603.3 411.6L729.4 475.1L731.2 472.0zM338.2 277.4L335.9 279.9L538.5 382.1L540.5 379.3zM597.5 407.9L595.5 410.8L599.3 412.8L601.3 409.9zM606.8 412.6L604.8 415.5L727.9 477.6L729.7 474.5zM325.9 274.1L323.6 276.5L533.9 382.8L535.9 380.0zM602.1 413.4L600.1 416.3L729.8 481.9L731.6 478.7zM316.2 272.1L314.0 274.5L535.2 386.6L537.3 383.8zM603.6 417.3L601.7 420.2L728.4 484.4L730.2 481.2zM306.6 270.1L304.4 272.6L533.6 388.9L535.6 386.0zM598.9 418.1L597.0 421.0L697.0 471.8L698.8 468.7zM704.6 471.6L702.8 474.7L726.9 486.9L728.7 483.8zM294.5 266.9L292.2 269.3L532.0 391.1L534.0 388.3zM591.1 417.3L589.1 420.2L725.4 489.5L727.3 486.3zM282.4 263.6L280.1 266.0L530.3 393.4L532.4 390.6zM583.3 416.5L581.3 419.4L727.3 493.8L729.2 490.6zM272.9 261.6L270.6 264.0L528.6 395.7L530.7 392.9zM569.4 412.6L567.4 415.5L571.2 417.4L573.2 414.5zM575.6 415.7L573.6 418.6L725.9 496.3L727.7 493.1zM260.8 258.4L258.5 260.8L261.7 262.4L264.0 260.0zM265.9 261.0L263.6 263.4L530.0 399.5L532.0 396.7zM555.5 408.7L553.5 411.6L724.4 498.9L726.2 495.7zM251.4 256.4L249.1 258.8L528.3 401.8L530.4 399.0zM544.8 406.3L542.7 409.2L702.8 491.2L704.6 488.0zM249.5 258.4L247.2 260.8L520.6 401.1L522.7 398.2zM534.0 404.0L532.0 406.9L724.8 505.8L726.6 502.6zM247.7 260.3L245.3 262.7L516.0 401.8L518.0 399.0zM526.3 403.2L524.3 406.1L723.3 508.4L725.2 505.2zM245.8 262.3L243.4 264.7L721.8 511.0L723.7 507.8zM243.9 264.2L241.5 266.6L723.7 515.4L725.6 512.2zM244.5 267.5L242.2 269.9L722.2 518.0L724.1 514.8zM242.6 269.4L240.3 271.9L720.7 520.7L722.6 517.4zM240.7 271.4L238.4 273.8L722.7 525.1L724.5 521.8zM241.4 274.7L239.0 277.1L721.2 527.8L723.0 524.5zM239.5 276.7L237.1 279.1L719.6 530.4L721.5 527.1zM237.6 278.6L235.2 281.1L718.1 533.1L720.0 529.8zM235.7 280.6L233.3 283.1L720.1 537.6L721.9 534.3zM236.3 284.0L233.9 286.4L718.5 540.3L720.4 536.9zM234.4 286.0L232.0 288.4L717.0 543.0L718.9 539.6zM232.4 288.0L230.1 290.5L712.0 543.9L713.9 540.5zM233.1 291.3L230.7 293.8L714.0 548.4L715.9 545.1zM231.1 293.3L228.7 295.8L709.0 549.3L710.9 546.0zM229.2 295.4L226.8 297.9L700.5 548.4L702.4 545.0zM705.1 546.4L703.1 549.8L710.9 553.9L712.8 550.5zM227.3 297.4L224.8 299.9L709.3 556.6L711.2 553.2zM227.9 300.8L225.5 303.3L711.3 561.2L713.2 557.8zM228.5 304.2L226.1 306.7L685.5 551.1L687.4 547.7zM690.1 549.1L688.1 552.5L709.7 564.0L711.6 560.6zM224.0 304.9L221.5 307.4L680.5 552.0L682.4 548.7zM685.0 550.0L683.1 553.4L701.2 563.1L703.1 559.6zM705.8 561.0L703.8 564.5L708.1 566.8L710.1 563.3zM224.6 308.3L222.1 310.9L710.1 571.4L712.0 568.0zM222.6 310.4L220.2 312.9L708.5 574.2L710.4 570.8zM220.6 312.4L218.2 315.0L706.9 577.0L708.9 573.6zM218.7 314.5L216.2 317.1L705.4 579.9L707.3 576.4zM219.3 318.0L216.8 320.6L672.5 565.8L674.5 562.4zM677.1 563.8L675.1 567.2L707.3 584.6L709.3 581.1zM217.3 320.1L214.8 322.7L698.7 583.6L700.7 580.1zM703.3 581.5L701.4 585.1L705.7 587.4L707.7 583.9zM215.3 322.2L212.8 324.8L693.6 584.6L695.6 581.0zM698.2 582.5L696.3 586.0L704.2 590.3L706.1 586.7zM215.9 325.7L213.4 328.3L706.1 595.0L708.1 591.5zM213.9 327.8L211.4 330.4L701.0 596.0L702.9 592.4zM211.9 329.9L209.4 332.5L667.8 581.7L669.9 578.2zM676.0 581.5L674.0 585.0L695.8 596.9L697.8 593.4zM700.5 594.8L698.5 598.4L702.9 600.8L704.9 597.2zM209.9 332.0L207.4 334.7L438.9 460.7L441.2 457.7zM443.5 458.9L441.2 462.0L445.0 464.0L447.3 461.0zM455.7 465.5L453.4 468.6L687.2 596.0L689.2 592.4zM691.9 593.9L689.9 597.4L701.3 603.7L703.3 600.1zM210.5 335.6L208.0 338.2L434.0 461.6L436.3 458.5zM456.9 469.7L454.6 472.8L699.7 606.6L701.7 603.0zM208.5 337.7L206.0 340.4L432.1 464.0L434.5 461.0zM442.8 465.5L440.5 468.6L698.1 609.5L700.1 605.9zM206.5 339.8L203.9 342.5L430.3 466.5L432.6 463.4zM437.9 466.4L435.6 469.4L700.1 614.3L702.1 610.7zM204.4 342.0L201.9 344.7L428.4 469.0L430.7 465.9zM436.1 468.8L433.8 471.9L437.6 474.0L439.9 470.9zM448.3 475.5L446.0 478.7L702.0 619.2L704.0 615.6zM205.0 345.6L202.5 348.3L417.4 466.5L419.8 463.4zM425.1 466.3L422.8 469.4L429.6 473.2L431.9 470.1zM434.2 471.3L431.9 474.5L689.7 616.3L691.7 612.6zM694.4 614.1L692.4 617.8L700.4 622.2L702.4 618.5zM203.0 347.7L200.4 350.4L681.0 615.3L683.0 611.7zM685.7 613.1L683.7 616.8L695.2 623.1L697.2 619.5zM200.9 349.9L198.4 352.6L672.2 614.3L674.3 610.7zM677.0 612.2L674.9 615.8L686.4 622.1L688.5 618.5zM691.2 620.0L689.1 623.6L693.6 626.1L695.6 622.4zM201.5 353.5L199.0 356.2L681.2 623.1L683.3 619.5zM199.5 355.7L196.9 358.4L672.5 622.1L674.5 618.5zM197.4 357.9L194.8 360.6L670.8 625.1L672.8 621.4zM195.3 360.1L192.8 362.8L662.0 624.1L664.1 620.4zM195.9 363.8L193.3 366.5L646.2 619.2L648.3 615.5zM193.8 366.0L191.3 368.7L641.0 620.1L643.1 616.5zM649.3 619.9L647.2 623.6L651.6 626.0L653.7 622.4zM191.8 368.2L189.2 371.0L632.2 619.1L634.4 615.5zM637.0 617.0L634.9 620.6L639.3 623.1L641.4 619.4zM192.3 371.9L189.7 374.7L616.5 614.2L618.7 610.6zM190.2 374.1L187.6 376.9L611.3 615.2L613.5 611.6zM188.2 376.4L185.5 379.2L606.1 616.2L608.3 612.6zM186.1 378.6L183.4 381.4L600.9 617.2L603.0 613.5zM186.6 382.4L184.0 385.2L595.6 618.1L597.8 614.5zM184.5 384.6L181.9 387.4L597.3 623.0L599.5 619.4zM687.7 669.3L685.7 673.1L690.2 675.7L692.3 671.9zM182.4 386.9L179.8 389.7L595.5 626.0L597.7 622.3zM678.8 668.3L676.7 672.1L688.5 678.8L690.6 675.0zM182.9 390.7L180.3 393.5L590.3 627.0L592.5 623.3zM677.1 671.4L675.0 675.2L690.5 684.1L692.6 680.2zM180.8 393.0L178.2 395.8L346.2 491.7L348.7 488.5zM354.0 491.5L351.5 494.7L585.0 628.0L587.2 624.3zM589.9 625.8L587.6 629.5L592.0 631.9L594.2 628.2zM671.7 672.4L669.6 676.2L688.8 687.2L690.9 683.3zM178.7 395.3L176.0 398.1L314.5 477.3L317.0 474.2zM334.0 483.9L331.5 487.0L344.2 494.3L346.7 491.1zM355.0 495.8L352.5 499.0L583.2 630.9L585.4 627.2zM588.1 628.8L585.8 632.4L590.2 634.9L592.4 631.2zM666.4 673.4L664.2 677.3L687.1 690.4L689.2 686.5zM176.6 397.5L173.9 400.4L306.6 476.4L309.1 473.3zM356.0 500.1L353.5 503.3L581.4 633.9L583.6 630.2zM586.3 631.7L584.0 635.4L588.4 637.9L590.6 634.2zM661.0 674.4L658.9 678.3L689.1 695.7L691.2 691.7zM177.1 401.4L174.4 404.3L301.6 477.3L304.1 474.1zM354.0 502.7L351.5 505.9L579.6 636.9L581.8 633.2zM584.5 634.7L582.2 638.4L586.6 640.9L588.8 637.2zM655.6 675.5L653.5 679.3L687.4 698.8L689.5 694.9zM175.0 403.7L172.3 406.6L299.5 479.8L302.1 476.7zM336.9 496.7L334.4 499.9L577.8 639.9L580.0 636.2zM650.3 676.5L648.1 680.4L685.7 702.0L687.8 698.1zM172.8 406.0L170.1 408.9L294.5 480.6L297.1 477.5zM334.9 499.2L332.3 502.4L575.9 642.9L578.2 639.2zM648.5 679.6L646.4 683.5L684.0 705.2L686.1 701.3zM173.3 409.9L170.7 412.8L292.4 483.2L295.0 480.0zM335.8 503.6L333.3 506.8L577.6 647.9L579.9 644.2zM639.5 678.6L637.3 682.5L686.0 710.6L688.2 706.6zM171.2 412.2L168.5 415.1L290.3 485.7L292.9 482.5zM333.8 506.2L331.2 509.4L575.8 651.0L578.0 647.2zM641.4 683.8L639.2 687.7L684.3 713.8L686.4 709.8zM169.0 414.6L166.3 417.5L288.2 488.2L290.8 485.1zM331.7 508.8L329.2 512.0L577.4 656.1L579.7 652.3zM636.0 684.8L633.8 688.8L682.6 717.1L684.7 713.1zM166.8 416.9L164.1 419.8L286.1 490.8L288.7 487.6zM329.7 511.4L327.1 514.6L579.1 661.2L581.4 657.4zM637.8 690.1L635.6 694.0L684.6 722.5L686.8 718.5zM167.4 420.8L164.7 423.8L284.0 493.4L286.6 490.2zM324.6 512.2L322.0 515.5L577.3 664.2L579.6 660.4zM632.4 691.2L630.2 695.1L682.9 725.8L685.0 721.7zM165.2 423.2L162.5 426.2L281.9 495.9L284.5 492.7zM322.5 514.9L320.0 518.1L582.5 671.5L584.8 667.6zM616.1 685.9L613.9 689.8L618.4 692.4L620.6 688.5zM627.0 692.2L624.8 696.1L629.3 698.8L631.5 694.8zM634.3 696.5L632.1 700.4L681.1 729.1L683.3 725.0zM163.0 425.6L160.3 428.5L282.8 500.2L285.4 497.0zM317.4 515.7L314.9 519.0L587.8 678.7L590.1 674.9zM614.3 689.0L612.1 693.0L679.4 732.4L681.6 728.3zM163.5 429.6L160.8 432.5L283.6 504.5L286.2 501.3zM312.3 516.6L309.7 519.9L681.4 737.9L683.6 733.8zM161.3 431.9L158.6 434.9L287.4 510.6L290.0 507.4zM307.2 517.5L304.6 520.8L679.7 741.2L681.9 737.1zM159.1 434.3L156.4 437.3L677.9 744.5L680.1 740.4zM156.9 436.7L154.1 439.7L676.2 747.9L678.4 743.7zM157.4 440.8L154.7 443.8L678.2 753.5L680.4 749.3zM155.2 443.2L152.4 446.2L676.4 756.8L678.6 752.7zM153.0 445.6L150.2 448.6L674.7 760.2L676.9 756.0zM150.7 448.0L147.9 451.1L676.7 765.9L678.9 761.7zM151.2 452.1L148.4 455.1L674.9 769.3L677.1 765.1zM149.0 454.6L146.2 457.6L669.3 770.4L671.5 766.2zM146.7 457.0L143.9 460.1L671.3 776.2L673.6 771.9zM147.2 461.1L144.4 464.2L669.5 779.6L671.8 775.3zM145.0 463.6L142.1 466.7L667.7 783.1L670.0 778.8zM142.7 466.1L139.9 469.2L669.8 788.9L672.0 784.6zM140.4 468.6L137.6 471.7L671.8 794.7L674.1 790.4zM140.9 472.8L138.1 475.9L670.0 798.2L672.3 793.9zM141.4 476.9L138.5 480.1L668.2 801.7L670.5 797.4zM136.3 477.8L133.5 480.9L666.4 805.3L668.6 800.9zM136.8 482.0L133.9 485.1L664.5 808.8L666.8 804.4zM134.5 484.5L131.6 487.7L666.6 814.8L668.9 810.3zM132.2 487.1L129.3 490.2L664.8 818.3L667.0 813.9zM132.6 491.3L129.8 494.5L666.8 824.3L669.1 819.9zM130.3 493.9L127.4 497.1L665.0 827.9L667.3 823.5zM128.0 496.5L125.1 499.7L659.2 829.1L661.5 824.7zM125.6 499.0L122.7 502.3L661.3 835.2L663.6 830.7zM126.1 503.4L123.2 506.6L659.4 838.8L661.7 834.3zM123.8 506.0L120.8 509.2L661.5 845.0L663.8 840.4zM121.4 508.6L118.5 511.8L659.6 848.6L661.9 844.1zM119.0 511.2L116.1 514.4L661.7 854.8L664.0 850.2zM119.5 515.6L116.5 518.8L659.8 858.5L662.1 853.9zM117.1 518.2L114.1 521.5L657.9 862.2L660.3 857.6zM114.7 520.8L111.8 524.1L656.0 866.0L658.4 861.4zM115.2 525.2L112.2 528.5L658.1 872.3L660.5 867.6zM112.8 527.9L109.8 531.2L656.2 876.0L658.6 871.4zM110.4 530.6L107.4 533.9L654.3 879.8L656.7 875.1zM108.0 533.3L105.0 536.6L652.4 883.6L654.8 878.9zM108.4 537.7L105.4 541.1L654.5 890.0L656.9 885.3zM106.0 540.4L102.9 543.8L364.4 710.3L367.1 706.3zM376.5 712.2L373.7 716.3L652.6 893.8L654.9 889.1zM103.5 543.1L100.5 546.5L341.9 700.6L344.7 696.7zM374.3 715.5L371.5 719.5L650.6 897.7L653.0 892.9zM103.9 547.7L100.9 551.1L336.3 701.7L339.1 697.7zM372.0 718.7L369.3 722.8L652.7 904.1L655.1 899.3zM101.5 550.4L98.5 553.8L334.0 704.9L336.9 700.9zM373.2 724.2L370.4 728.2L638.7 900.2L641.1 895.5zM99.1 553.1L96.0 556.5L331.8 708.1L334.6 704.1zM371.0 727.4L368.2 731.5L624.6 896.4L627.1 891.6zM96.6 555.9L93.5 559.3L329.5 711.3L332.3 707.3zM368.7 730.7L365.9 734.8L606.7 889.9L609.2 885.2zM97.0 560.5L93.9 563.9L327.2 714.6L330.0 710.6zM369.9 736.2L367.1 740.3L588.8 883.6L591.4 878.8zM94.5 563.2L91.5 566.7L328.2 720.0L331.1 715.9zM367.7 739.5L364.8 743.7L575.0 879.7L577.5 875.0zM92.1 566.0L89.0 569.5L325.9 723.2L328.8 719.2zM365.4 742.9L362.6 747.0L561.2 875.9L563.8 871.2zM92.4 570.7L89.4 574.1L323.6 726.5L326.5 722.5zM363.1 746.2L360.3 750.4L543.6 869.6L546.2 865.0zM90.0 573.5L86.9 576.9L321.3 729.8L324.2 725.7zM364.3 751.8L361.5 756.0L530.0 865.8L532.6 861.2zM90.3 578.1L87.2 581.6L322.4 735.3L325.2 731.2zM362.0 755.2L359.2 759.4L508.7 857.1L511.4 852.5zM85.0 579.1L81.8 582.6L320.0 738.6L322.9 734.5zM356.3 756.3L353.4 760.5L499.0 855.9L501.7 851.3zM85.3 583.8L82.2 587.3L317.7 741.9L320.6 737.8zM354.0 759.7L351.1 763.9L386.9 787.4L389.8 783.1zM392.4 784.9L389.6 789.2L474.2 844.8L477.0 840.2zM479.8 842.1L477.1 846.6L481.7 849.7L484.4 845.1zM82.8 586.6L79.7 590.1L325.5 752.0L328.4 747.8zM351.6 763.1L348.8 767.3L468.3 846.0L471.0 841.4zM80.3 589.5L77.2 593.0L330.0 759.9L332.9 755.7zM349.3 766.5L346.5 770.7L385.9 796.7L388.7 792.4zM391.4 794.2L388.6 798.5L425.5 822.9L428.3 818.4zM431.1 820.2L428.3 824.7L443.8 835.0L446.6 830.5zM449.4 832.3L446.6 836.8L451.2 839.8L454.0 835.3zM77.8 592.3L74.6 595.9L331.1 765.5L334.0 761.3zM350.5 772.2L347.6 776.4L437.9 836.2L440.7 831.7zM78.1 597.1L75.0 600.7L335.7 773.5L338.6 769.3zM348.2 775.6L345.3 779.9L370.7 796.7L373.5 792.4zM376.2 794.2L373.4 798.5L384.9 806.2L387.7 801.8zM390.4 803.6L387.6 808.0L399.2 815.7L402.1 811.2zM404.8 813.0L402.0 817.5L421.0 830.1L423.8 825.6zM75.6 600.0L72.4 603.6L333.3 777.0L336.2 772.7zM338.9 774.4L336.0 778.7L407.8 826.5L410.6 822.0zM75.9 604.8L72.8 608.4L391.0 820.4L393.9 816.0zM73.4 607.7L70.2 611.3L353.1 800.2L356.0 795.9zM358.6 797.7L355.7 802.0L367.2 809.7L370.1 805.3zM372.8 807.1L369.9 811.5L377.9 816.8L380.8 812.4zM70.8 610.6L67.6 614.2L361.3 810.9L364.2 806.5zM71.1 615.5L67.9 619.1L344.8 804.9L347.7 800.5zM65.6 616.4L62.4 620.1L328.4 799.0L331.4 794.7zM66.0 621.3L62.8 625.0L319.0 797.8L322.0 793.5zM66.3 626.3L63.1 629.9L302.7 792.0L305.7 787.7zM60.8 627.3L57.5 630.9L290.0 788.5L293.0 784.2zM61.1 632.2L57.9 635.9L273.8 782.7L276.9 778.4zM58.5 635.2L55.2 638.9L261.2 779.2L264.2 774.9zM55.9 638.2L52.6 641.9L238.5 768.9L241.6 764.6zM244.1 766.4L241.0 770.6L245.2 773.4L248.3 769.2zM53.2 641.2L49.9 644.9L232.6 770.0L235.8 765.8zM53.5 646.2L50.2 650.0L216.8 764.3L219.9 760.1zM50.9 649.2L47.6 653.0L197.8 756.3L200.9 752.2zM203.4 753.9L200.3 758.1L204.3 760.9L207.5 756.7zM48.2 652.3L44.9 656.1L188.7 755.2L191.8 751.0zM48.5 657.4L45.2 661.2L176.3 751.8L179.5 747.7zM45.8 660.4L42.5 664.2L160.8 746.2L164.0 742.1zM46.1 665.6L42.8 669.4L142.1 738.4L145.4 734.3zM147.8 736.0L144.6 740.1L148.5 742.9L151.8 738.7zM40.5 666.6L37.1 670.4L126.8 732.9L130.1 728.8zM132.5 730.5L129.2 734.6L133.1 737.3L136.4 733.2zM40.7 671.8L37.4 675.6L121.0 734.0L124.3 729.9zM41.0 676.9L37.7 680.8L105.7 728.5L109.0 724.4zM35.3 678.0L31.9 681.9L93.7 725.2L97.0 721.1zM35.6 683.2L32.2 687.1L78.5 719.7L81.9 715.7zM32.9 686.3L29.5 690.3L60.5 712.1L63.8 708.1zM66.2 709.8L62.8 713.8L66.6 716.5L70.0 712.4zM30.1 689.5L26.7 693.4L45.5 706.7L48.9 702.8zM27.4 692.7L24.0 696.6L39.7 707.8L43.2 703.8z"/><path d="M308.2 1213.1L-313.9 651.3M308.2 1213.1L755.9 511.2M368.0 1119.3L-248.8 594.3M230.2 1142.7L690.2 474.4M423.6 1032.2L-187.4 540.6M156.6 1076.2L627.2 439.2M475.2 951.2L-129.5 489.9M86.8 1013.2L566.6 405.2M523.4 875.6L-74.6 441.9M20.7 953.5L508.4 372.6M568.5 805.0L-22.7 396.4M-42.1 896.7L452.3 341.3M610.7 738.8L26.6 353.2M-101.8 842.8L398.3 311.0M650.3 676.7L73.5 312.2M-158.7 791.5L346.3 281.9M687.6 618.3L118.1 273.2M-212.8 742.6L296.1 253.8M722.7 563.2L160.5 236.0M-264.5 695.9L247.7 226.7M755.9 511.2L201.0 200.6M-313.9 651.3L201.0 200.6" stroke="#a0a0a4" stroke-opacity=".5" stroke-width="1" fill="none"/><defs><pattern id="pcd" width="3" height="3" patternUnits="userSpaceOnUse" patternTransform="rotate(17)"><rect width="3" height="3" fill="#eeeeee"/><rect x=".4" y=".4" width="1.100" height="1.100" fill="#cfcfcf"/></pattern><pattern id="pcs" width="3.400" height="40" patternUnits="userSpaceOnUse" patternTransform="rotate(23)"><rect width="3.400" height="40" fill="#eeeeee"/><rect x="0" width="1.200" height="40" fill="#d6d6d6"/></pattern><linearGradient id="pcg" gradientUnits="userSpaceOnUse" x1="470" y1="720" x2="640" y2="830"><stop offset="0" stop-color="#f3f3f3"/><stop offset=".5" stop-color="#f0f0f0" stop-opacity=".75"/><stop offset="1" stop-color="#ececec" stop-opacity=".1"/></linearGradient><linearGradient id="pcg2" gradientUnits="userSpaceOnUse" x1="560" y1="760" x2="690" y2="830"><stop offset="0" stop-color="#e8e8e8" stop-opacity="0"/><stop offset="1" stop-color="#e8e8e8" stop-opacity="1"/></linearGradient><linearGradient id="shg" gradientUnits="userSpaceOnUse" x1="566" y1="700" x2="640" y2="700"><stop offset="0" stop-color="#dcdcdc"/><stop offset=".35" stop-color="#d0d0d0"/><stop offset="1" stop-color="#c5c5c5"/></linearGradient><linearGradient id="smg" gradientUnits="userSpaceOnUse" x1="520" y1="860" x2="640" y2="815"><stop offset="0" stop-color="#000"/><stop offset="1" stop-color="#fff"/></linearGradient><clipPath id="pcc"><polygon points="487.2,686.5 568.7,690.8 653.0,698.6 653.5,704.6 699.5,705.8 644.5,909.0 540.0,869.0 530.6,863.5 459.0,731.5"/></clipPath></defs><g clip-path="url(#pcc)"><polygon points="487.2,686.5 568.7,690.8 653.0,698.6 653.5,704.6 699.5,705.8 644.5,909.0 540.0,869.0 530.6,863.5 459.0,731.5" fill="url(#pcd)"/><polygon points="487.2,686.5 568.7,690.8 653.0,698.6 653.5,704.6 699.5,705.8 644.5,909.0 540.0,869.0 530.6,863.5 459.0,731.5" fill="url(#pcs)" opacity=".0"/><mask id="sm" maskUnits="userSpaceOnUse" x="400" y="650" width="320" height="300"><rect x="400" y="650" width="320" height="300" fill="url(#smg)"/></mask><polygon points="547.0,683.0 704.0,698.0 652.0,918.0 507.0,873.0" fill="url(#pcs)" mask="url(#sm)"/><polygon points="547.0,688.0 627.0,688.0 579.0,888.0 529.0,863.0" fill="url(#pcg2)" opacity="0"/><polygon points="487.2,686.5 568.7,690.8 653.0,698.6 653.5,704.6 699.5,705.8 644.5,909.0 540.0,869.0 530.6,863.5 459.0,731.5" fill="url(#pcg)"/><path d="M567.3 678L567.3 691Q566.5 724 610.5 738.5L653.0 704.5L659 678z" fill="url(#shg)"/></g><polygon points="568.0,690.6 607.0,688.5 628.0,698.5 647.0,694.0 699.0,684.0 699.5,703.0" fill="#c6c6c6"/><path d="M308.2 1213.1L-313.9 651.3M308.2 1213.1L755.9 511.2M368.0 1119.3L-248.8 594.3M230.2 1142.7L690.2 474.4M423.6 1032.2L-187.4 540.6M156.6 1076.2L627.2 439.2M475.2 951.2L-129.5 489.9M86.8 1013.2L566.6 405.2M523.4 875.6L-74.6 441.9M20.7 953.5L508.4 372.6M568.5 805.0L-22.7 396.4M-42.1 896.7L452.3 341.3M610.7 738.8L26.6 353.2M-101.8 842.8L398.3 311.0M650.3 676.7L73.5 312.2M-158.7 791.5L346.3 281.9M687.6 618.3L118.1 273.2M-212.8 742.6L296.1 253.8M722.7 563.2L160.5 236.0M-264.5 695.9L247.7 226.7M755.9 511.2L201.0 200.6M-313.9 651.3L201.0 200.6" stroke="#a0a0a4" stroke-opacity=".21" stroke-width="1" fill="none" clip-path="url(#pcc)"/><path fill="#0e0e0e" d="M699.0 359.1L697.3 361.8L707.3 366.5L708.9 363.8zM688.4 356.9L686.7 359.6L696.5 364.3L698.2 361.6zM671.6 351.8L669.9 354.4L673.6 356.2L675.3 353.6zM677.7 354.7L676.0 357.4L685.9 362.1L687.6 359.4zM693.1 362.1L691.4 364.7L695.1 366.5L696.8 363.8zM667.2 352.5L665.4 355.2L675.2 359.8L676.9 357.2zM656.6 350.4L654.9 353.0L667.7 359.1L669.4 356.5zM646.1 348.2L644.3 350.8L657.1 356.9L658.8 354.3zM635.5 346.0L633.8 348.6L646.5 354.7L648.2 352.1zM625.1 343.8L623.3 346.4L639.0 354.0L640.7 351.4zM617.6 343.1L615.8 345.7L625.4 350.3L627.2 347.7zM555.6 324.6L553.7 327.2L563.1 331.7L564.9 329.1zM548.3 323.9L546.4 326.4L561.5 333.8L563.4 331.3zM535.2 320.4L533.3 322.9L548.3 330.3L550.2 327.7zM525.0 318.3L523.1 320.8L538.0 328.1L539.9 325.6zM509.1 313.4L507.2 315.9L527.8 326.0L529.7 323.5zM501.9 312.7L499.9 315.2L514.7 322.5L516.6 320.0zM488.9 309.3L487.0 311.8L507.4 321.8L509.3 319.3zM478.9 307.2L476.9 309.7L494.4 318.3L496.4 315.8zM466.1 303.8L464.1 306.2L484.3 316.2L486.2 313.7zM551.8 345.9L549.9 348.5L553.5 350.3L555.3 347.7zM456.1 301.7L454.1 304.2L468.6 311.3L470.6 308.9zM443.4 298.3L441.3 300.8L458.5 309.3L460.5 306.8zM548.7 350.3L546.7 352.9L550.3 354.6L552.2 352.0zM433.4 296.3L431.4 298.7L445.8 305.8L447.8 303.4zM450.0 304.5L448.0 306.9L451.3 308.6L453.3 306.1zM547.1 352.4L545.2 355.1L548.7 356.8L550.6 354.2zM420.8 292.9L418.8 295.3L435.8 303.8L437.8 301.3zM440.0 302.4L438.0 304.9L444.1 307.9L446.1 305.4zM548.4 356.1L546.5 358.7L550.0 360.5L552.0 357.8zM408.2 289.5L406.2 291.9L423.1 300.3L425.1 297.9zM430.1 300.3L428.0 302.8L431.3 304.4L433.4 302.0zM546.8 358.3L544.9 360.9L551.4 364.1L553.3 361.5zM398.4 287.5L396.3 289.9L415.9 299.6L417.9 297.2zM388.6 285.5L386.5 287.9L400.6 294.9L402.6 292.5zM407.5 294.9L405.5 297.3L408.7 299.0L410.8 296.5zM543.6 362.7L541.7 365.3L545.2 367.1L547.2 364.4zM376.1 282.1L374.0 284.5L390.7 292.9L392.8 290.4zM542.0 364.9L540.1 367.5L543.6 369.3L545.6 366.6zM363.7 278.8L361.6 281.2L380.9 290.8L383.0 288.4zM385.1 289.5L383.0 291.9L386.3 293.5L388.4 291.1zM543.4 368.6L541.4 371.2L545.0 373.0L546.9 370.3zM356.7 278.1L354.6 280.5L368.4 287.5L370.5 285.1zM344.4 274.8L342.2 277.2L361.3 286.8L363.4 284.4zM537.2 371.5L535.2 374.2L538.8 376.0L540.7 373.3zM332.1 271.5L329.9 273.9L346.3 282.1L348.4 279.7zM535.5 373.8L533.6 376.4L540.1 379.7L542.1 377.0zM322.5 269.6L320.3 271.9L336.6 280.1L338.7 277.7zM312.9 267.6L310.7 269.9L324.3 276.8L326.4 274.4zM535.2 379.7L533.3 382.4L536.9 384.2L538.8 381.5zM298.1 263.0L296.0 265.4L314.6 274.8L316.8 272.4zM536.6 383.5L534.6 386.2L538.2 388.0L540.2 385.3zM597.4 414.2L595.5 417.1L602.4 420.5L604.3 417.7zM291.2 262.4L289.0 264.7L305.0 272.8L307.2 270.5zM535.0 385.8L533.0 388.5L536.6 390.3L538.5 387.6zM586.6 411.9L584.7 414.7L597.7 421.3L599.6 418.5zM279.1 259.1L276.9 261.4L292.8 269.5L295.0 267.2zM533.3 388.0L531.3 390.8L534.9 392.6L536.9 389.8zM575.7 409.5L573.8 412.3L589.9 420.5L591.8 417.7zM269.6 257.2L267.4 259.5L280.7 266.3L282.9 263.9zM564.9 407.2L563.0 410.0L582.1 419.7L584.0 416.9zM252.6 251.4L250.4 253.7L253.4 255.2L255.6 252.9zM257.7 253.9L255.4 256.3L271.2 264.3L273.4 262.0zM530.0 392.6L528.0 395.3L531.6 397.2L533.6 394.4zM551.1 403.3L549.2 406.1L568.1 415.8L570.1 413.0zM572.5 414.2L570.6 417.0L574.3 418.9L576.2 416.1zM248.2 252.0L246.0 254.3L259.1 261.0L261.4 258.7zM263.4 259.7L261.2 262.1L264.2 263.6L266.4 261.3zM534.4 397.9L532.4 400.7L554.2 411.9L556.2 409.1zM246.4 253.9L244.1 256.3L249.7 259.1L251.9 256.8zM529.7 398.7L527.7 401.5L543.4 409.5L545.4 406.7zM244.5 255.9L242.2 258.2L247.8 261.0L250.0 258.7zM522.0 397.9L520.0 400.7L532.7 407.2L534.7 404.4zM242.6 257.8L240.4 260.1L245.9 263.0L248.2 260.6zM517.4 398.7L515.3 401.4L525.0 406.4L527.0 403.6zM240.7 259.7L238.5 262.1L244.0 264.9L246.3 262.6zM241.4 263.0L239.1 265.3L242.1 266.9L244.4 264.5zM237.0 263.6L234.7 266.0L242.8 270.1L245.1 267.8zM237.6 266.9L235.3 269.2L240.9 272.1L243.2 269.8zM238.2 270.1L235.9 272.5L239.0 274.1L241.3 271.7zM236.3 272.1L234.0 274.5L239.6 277.4L241.9 275.0zM234.4 274.1L232.1 276.4L237.7 279.4L240.0 277.0zM232.5 276.1L230.2 278.4L235.8 281.4L238.1 279.0zM233.1 279.4L230.8 281.7L233.9 283.3L236.2 281.0zM231.2 281.4L228.9 283.7L234.5 286.7L236.8 284.3zM229.3 283.3L227.0 285.7L232.6 288.7L234.9 286.3zM229.9 286.7L227.6 289.1L230.7 290.7L233.0 288.3zM228.0 288.7L225.6 291.1L231.3 294.1L233.6 291.7zM226.0 290.7L223.7 293.1L229.3 296.1L231.7 293.7zM224.1 292.7L221.7 295.2L227.4 298.1L229.7 295.7zM224.7 296.1L222.4 298.5L225.4 300.2L227.8 297.7zM222.7 298.1L220.4 300.6L226.1 303.6L228.4 301.1zM220.8 300.2L218.4 302.6L226.7 307.0L229.0 304.5zM221.4 303.6L219.0 306.0L222.1 307.7L224.5 305.2zM219.4 305.6L217.1 308.1L222.8 311.1L225.1 308.7zM217.5 307.7L215.1 310.2L220.8 313.2L223.1 310.7zM215.5 309.8L213.1 312.2L218.8 315.3L221.2 312.8zM216.1 313.2L213.7 315.7L216.8 317.4L219.2 314.9zM214.1 315.3L211.7 317.8L217.4 320.8L219.8 318.3zM212.1 317.4L209.7 319.9L215.4 322.9L217.8 320.4zM210.1 319.4L207.7 322.0L213.4 325.0L215.8 322.5zM705.3 586.4L703.4 589.8L714.7 595.9L716.6 592.5zM210.7 322.9L208.3 325.5L214.0 328.6L216.4 326.0zM208.7 325.0L206.3 327.6L212.0 330.7L214.4 328.1zM702.1 592.1L700.2 595.5L711.6 601.6L713.5 598.2zM206.7 327.1L204.3 329.7L210.0 332.8L212.4 330.3zM704.1 596.8L702.2 600.3L710.0 604.5L711.9 601.1zM207.3 330.7L204.9 333.2L208.0 334.9L210.4 332.4zM440.5 457.4L438.3 460.3L441.9 462.3L444.1 459.3zM446.5 460.7L444.3 463.6L454.1 468.9L456.3 466.0zM702.5 599.7L700.6 603.2L712.0 609.4L713.9 605.9zM205.3 332.8L202.9 335.4L208.6 338.5L211.0 335.9zM435.6 458.2L433.4 461.1L455.3 473.1L457.5 470.1zM700.9 602.6L699.0 606.1L710.4 612.3L712.3 608.8zM203.3 334.9L200.8 337.5L206.6 340.6L209.0 338.1zM433.8 460.6L431.5 463.6L441.2 468.9L443.5 465.9zM699.3 605.5L697.4 609.0L712.4 617.2L714.3 613.7zM201.2 337.1L198.8 339.6L204.6 342.8L207.0 340.2zM431.9 463.1L429.7 466.1L436.3 469.8L438.6 466.8zM701.2 610.3L699.3 613.8L710.8 620.1L712.7 616.6zM199.2 339.2L196.8 341.8L202.5 344.9L205.0 342.3zM430.0 465.6L427.8 468.6L434.5 472.3L436.7 469.3zM439.2 470.6L436.9 473.6L446.7 479.0L448.9 476.0zM703.2 615.2L701.3 618.7L709.2 623.0L711.1 619.5zM199.8 342.8L197.3 345.4L203.1 348.5L205.5 345.9zM419.1 463.1L416.8 466.1L423.5 469.8L425.7 466.8zM431.2 469.8L428.9 472.8L432.6 474.8L434.9 471.8zM701.6 618.1L699.7 621.7L707.5 626.0L709.5 622.5zM197.7 344.9L195.3 347.5L201.1 350.7L203.5 348.1zM700.0 621.1L698.0 624.6L705.9 629.0L707.9 625.4zM198.3 348.5L195.8 351.1L199.0 352.9L201.5 350.3zM698.4 624.0L696.4 627.6L707.9 633.9L709.9 630.4zM196.3 350.7L193.8 353.3L199.6 356.5L202.1 353.9zM700.3 629.0L698.4 632.5L706.3 636.9L708.2 633.3zM194.2 352.9L191.7 355.5L197.5 358.7L200.0 356.1zM698.7 631.9L696.7 635.5L708.3 641.9L710.2 638.3zM192.1 355.1L189.7 357.7L195.5 360.9L197.9 358.3zM697.1 634.9L695.1 638.5L706.7 644.9L708.6 641.3zM190.1 357.2L187.6 359.9L193.4 363.1L195.9 360.5zM699.0 639.9L697.1 643.5L705.1 648.0L707.0 644.3zM190.6 360.9L188.1 363.5L194.0 366.8L196.5 364.1zM697.4 642.9L695.4 646.5L703.4 651.0L705.4 647.4zM188.6 363.1L186.1 365.8L191.9 369.0L194.4 366.4zM695.8 645.9L693.8 649.6L705.4 656.1L707.4 652.4zM189.1 366.8L186.6 369.5L189.8 371.2L192.3 368.6zM694.1 649.0L692.1 652.6L703.8 659.1L705.8 655.5zM187.0 369.0L184.5 371.7L190.4 375.0L192.9 372.3zM617.9 610.3L615.8 613.8L623.5 618.1L625.6 614.5zM696.1 654.0L694.1 657.7L705.8 664.3L707.8 660.6zM184.9 371.2L182.4 373.9L188.3 377.2L190.8 374.5zM612.7 611.2L610.6 614.7L621.7 621.0L623.8 617.5zM694.4 657.1L692.5 660.8L704.2 667.4L706.1 663.7zM182.8 373.5L180.3 376.1L186.2 379.4L188.7 376.7zM607.5 612.2L605.4 615.7L616.5 622.0L618.6 618.4zM692.8 660.2L690.8 663.8L702.5 670.4L704.5 666.7zM183.4 377.2L180.9 379.9L184.1 381.7L186.6 379.0zM602.2 613.2L600.1 616.7L611.3 623.0L613.4 619.4zM691.1 663.2L689.1 666.9L700.8 673.5L702.8 669.8zM181.3 379.4L178.8 382.1L184.6 385.5L187.2 382.7zM597.0 614.1L594.9 617.6L606.0 623.9L608.1 620.4zM693.1 668.4L691.1 672.1L699.2 676.7L701.2 672.9zM179.2 381.7L176.6 384.4L182.5 387.7L185.1 385.0zM598.7 619.0L596.6 622.5L604.2 626.9L606.4 623.3zM691.4 671.5L689.4 675.2L697.5 679.8L699.5 676.0zM179.7 385.5L177.2 388.2L180.4 390.0L182.9 387.3zM596.9 622.0L594.8 625.5L599.0 627.9L601.1 624.3zM689.8 674.6L687.7 678.3L699.5 685.0L701.5 681.3zM177.6 387.7L175.1 390.5L180.9 393.8L183.5 391.1zM591.7 622.9L589.5 626.5L597.2 630.8L599.3 627.3zM691.8 679.8L689.7 683.5L697.9 688.2L699.9 684.4zM175.5 390.0L172.9 392.7L178.8 396.1L181.4 393.3zM348.0 488.2L345.6 491.3L352.2 495.0L354.6 492.0zM586.4 623.9L584.3 627.5L588.4 629.8L590.6 626.3zM593.4 627.9L591.2 631.4L595.4 633.8L597.6 630.3zM690.1 682.9L688.1 686.7L696.2 691.3L698.2 687.5zM173.3 392.3L170.8 395.0L176.7 398.4L179.2 395.6zM316.3 473.8L313.9 476.8L332.2 487.3L334.7 484.3zM346.0 490.8L343.6 493.8L353.2 499.3L355.6 496.2zM584.6 626.9L582.5 630.4L586.6 632.8L588.8 629.3zM591.6 630.8L589.4 634.4L593.6 636.8L595.8 633.2zM688.4 686.1L686.4 689.8L698.2 696.6L700.2 692.8zM173.9 396.1L171.3 398.8L174.5 400.7L177.1 397.9zM308.4 473.0L306.0 476.0L318.3 483.1L320.8 480.1zM323.1 481.4L320.7 484.4L324.2 486.5L326.7 483.4zM329.1 484.8L326.6 487.8L333.2 491.6L335.6 488.5zM347.0 495.0L344.6 498.1L354.2 503.7L356.6 500.5zM582.8 629.8L580.7 633.4L584.8 635.8L587.0 632.2zM690.4 691.3L688.4 695.1L696.5 699.8L698.6 696.0zM171.7 398.4L169.2 401.2L175.1 404.5L177.7 401.8zM303.4 473.8L301.0 476.8L310.4 482.2L312.8 479.2zM327.0 487.3L324.6 490.4L328.2 492.5L330.6 489.4zM348.0 499.3L345.5 502.4L352.2 506.3L354.6 503.1zM581.0 632.8L578.8 636.4L583.0 638.8L585.2 635.2zM688.7 694.5L686.7 698.3L694.8 703.0L696.9 699.2zM169.6 400.7L167.0 403.5L172.9 406.9L175.5 404.1zM301.4 476.3L298.9 479.4L302.4 481.4L304.9 478.4zM331.0 493.3L328.5 496.4L335.1 500.2L337.5 497.1zM579.2 635.8L577.0 639.4L588.2 645.8L590.4 642.2zM687.0 697.7L685.0 701.5L693.1 706.2L695.2 702.4zM170.1 404.5L167.5 407.3L170.8 409.2L173.4 406.4zM296.4 477.2L293.9 480.2L297.4 482.2L299.9 479.2zM331.9 497.6L329.4 500.7L333.0 502.8L335.5 499.7zM577.4 638.8L575.2 642.4L586.4 648.9L588.6 645.2zM685.3 700.9L683.2 704.7L695.2 711.6L697.2 707.7zM168.0 406.9L165.4 409.7L171.3 413.1L173.9 410.3zM294.3 479.7L291.8 482.7L295.3 484.8L297.8 481.7zM329.9 500.2L327.4 503.3L334.0 507.1L336.5 504.0zM579.1 643.8L576.9 647.4L584.6 651.9L586.8 648.3zM687.3 706.2L685.2 710.1L697.2 717.0L699.3 713.1zM165.8 409.2L163.2 412.0L169.1 415.4L171.7 412.6zM292.2 482.2L289.7 485.3L293.3 487.3L295.8 484.3zM330.8 504.5L328.3 507.6L332.0 509.7L334.4 506.6zM577.2 646.8L575.0 650.5L586.3 657.0L588.5 653.3zM685.6 709.4L683.5 713.3L691.8 718.1L693.8 714.2zM163.6 411.5L161.0 414.3L167.0 417.8L169.6 415.0zM290.1 484.8L287.6 487.8L291.2 489.9L293.7 486.8zM325.7 505.4L323.3 508.5L329.9 512.3L332.4 509.2zM578.9 651.9L576.7 655.5L588.0 662.1L590.2 658.4zM683.9 712.7L681.8 716.5L693.8 723.5L695.9 719.6zM164.1 415.4L161.5 418.2L164.8 420.1L167.4 417.3zM288.1 487.3L285.5 490.4L292.0 494.1L294.5 491.1zM323.7 508.0L321.2 511.1L327.8 515.0L330.3 511.8zM580.6 657.0L578.4 660.7L589.7 667.2L591.9 663.5zM685.9 718.1L683.8 722.0L692.1 726.8L694.2 722.9zM162.0 417.8L159.3 420.6L165.3 424.1L167.9 421.2zM286.0 489.9L283.4 492.9L287.0 495.0L289.5 491.9zM321.6 510.6L319.1 513.7L322.7 515.8L325.2 512.7zM578.7 660.0L576.5 663.7L598.6 676.6L600.7 672.8zM684.2 721.3L682.1 725.2L690.4 730.1L692.4 726.1zM159.8 420.1L157.1 423.0L163.1 426.5L165.7 423.6zM283.9 492.4L281.3 495.5L287.8 499.3L290.3 496.2zM316.5 511.4L314.0 514.6L320.7 518.5L323.2 515.3zM584.0 667.2L581.8 670.9L614.7 690.2L616.9 686.4zM682.4 724.6L680.4 728.5L688.6 733.4L690.7 729.4zM160.3 424.1L157.7 426.9L160.9 428.8L163.5 426.0zM284.7 496.7L282.2 499.8L288.7 503.6L291.2 500.5zM311.4 512.3L308.9 515.5L315.6 519.3L318.1 516.2zM589.2 674.5L587.0 678.2L612.9 693.4L615.1 689.6zM680.7 727.9L678.6 731.8L690.7 738.9L692.8 734.9zM158.1 426.4L155.4 429.3L161.4 432.8L164.1 429.9zM285.5 501.0L283.0 504.1L289.5 507.9L292.0 504.8zM294.4 506.2L291.9 509.3L295.5 511.4L298.0 508.3zM306.4 513.2L303.8 516.3L310.4 520.2L313.0 517.0zM682.7 733.4L680.6 737.3L689.0 742.2L691.0 738.2zM155.9 428.8L153.2 431.7L159.2 435.2L161.9 432.3zM289.3 507.1L286.8 510.2L305.3 521.1L307.9 517.9zM681.0 736.7L678.9 740.6L687.2 745.5L689.3 741.5zM153.7 431.2L151.0 434.1L157.0 437.6L159.7 434.7zM679.2 740.0L677.1 744.0L685.5 748.9L687.6 744.9zM154.2 435.2L151.5 438.1L154.8 440.0L157.5 437.1zM677.5 743.3L675.4 747.3L687.5 754.5L689.6 750.5zM149.2 436.0L146.6 438.9L155.3 444.1L158.0 441.2zM679.5 748.9L677.4 752.9L685.8 757.9L687.9 753.8zM149.7 440.0L147.1 442.9L153.1 446.5L155.7 443.6zM677.8 752.2L675.6 756.3L684.0 761.3L686.1 757.2zM147.5 442.4L144.8 445.4L150.8 448.9L153.5 446.0zM676.0 755.6L673.9 759.7L686.1 766.9L688.2 762.8zM148.0 446.5L145.3 449.4L148.6 451.4L151.3 448.4zM678.0 761.3L675.9 765.3L684.3 770.4L686.4 766.3zM145.7 448.9L143.0 451.9L149.1 455.5L151.8 452.5zM676.3 764.7L674.1 768.7L686.4 776.1L688.5 772.0zM143.5 451.4L140.8 454.3L146.8 457.9L149.5 455.0zM670.7 765.8L668.5 769.9L680.8 777.2L682.9 773.1zM144.0 455.5L141.3 458.4L144.6 460.4L147.3 457.4zM672.7 771.5L670.5 775.6L682.9 783.0L685.0 778.8zM141.7 457.9L139.0 460.9L145.1 464.5L147.8 461.5zM670.9 774.9L668.7 779.0L681.1 786.5L683.2 782.3zM139.5 460.4L136.7 463.4L142.8 467.0L145.5 464.0zM669.1 778.4L666.9 782.5L679.3 789.9L681.4 785.8zM137.2 462.9L134.4 465.8L140.5 469.5L143.2 466.5zM671.1 784.1L669.0 788.3L681.4 795.8L683.5 791.6zM134.9 465.3L132.2 468.3L138.2 472.0L141.0 469.0zM673.2 789.9L671.0 794.1L679.6 799.3L681.7 795.1zM135.4 469.5L132.6 472.5L138.7 476.2L141.5 473.2zM671.4 793.4L669.2 797.6L677.8 802.8L679.9 798.6zM133.1 472.0L130.3 475.0L139.2 480.4L141.9 477.4zM669.6 796.9L667.4 801.1L675.9 806.3L678.1 802.1zM133.5 476.2L130.8 479.2L134.1 481.2L136.9 478.2zM667.8 800.4L665.6 804.7L678.0 812.3L680.2 808.0zM131.2 478.7L128.5 481.7L134.6 485.5L137.4 482.4zM665.9 804.0L663.7 808.2L676.2 815.8L678.4 811.6zM128.9 481.2L126.2 484.3L132.3 488.0L135.0 485.0zM668.0 809.9L665.8 814.2L674.4 819.4L676.6 815.1zM126.6 483.8L123.8 486.8L130.0 490.6L132.7 487.5zM666.2 813.4L663.9 817.7L676.5 825.4L678.7 821.1zM127.1 488.0L124.3 491.1L130.4 494.8L133.2 491.8zM668.2 819.4L666.0 823.7L674.7 829.0L676.9 824.7zM124.7 490.6L121.9 493.6L128.1 497.4L130.9 494.3zM666.4 823.0L664.2 827.3L672.8 832.7L675.0 828.3zM122.4 493.1L119.6 496.2L125.7 500.0L128.6 496.9zM660.6 824.2L658.4 828.5L671.0 836.3L673.2 831.9zM122.9 497.4L120.0 500.5L123.4 502.6L126.2 499.5zM662.7 830.2L660.4 834.6L673.1 842.4L675.3 838.0zM120.5 500.0L117.7 503.1L123.9 506.9L126.7 503.8zM660.8 833.9L658.6 838.2L671.2 846.1L673.5 841.7zM118.2 502.6L115.3 505.7L121.5 509.5L124.3 506.4zM662.9 839.9L660.7 844.3L669.4 849.8L671.6 845.3zM115.8 505.2L113.0 508.3L119.1 512.1L122.0 509.0zM661.0 843.6L658.8 848.0L671.5 855.9L673.7 851.5zM116.2 509.5L113.4 512.7L116.8 514.8L119.6 511.6zM663.1 849.7L660.9 854.2L669.6 859.6L671.9 855.2zM113.9 512.1L111.0 515.3L117.2 519.2L120.1 516.0zM661.2 853.4L659.0 857.9L671.7 865.9L674.0 861.4zM111.5 514.8L108.6 517.9L114.8 521.8L117.7 518.6zM659.4 857.2L657.1 861.6L665.9 867.1L668.1 862.6zM111.9 519.1L109.0 522.3L112.4 524.4L115.3 521.3zM657.5 860.9L655.2 865.4L668.0 873.4L670.2 868.9zM109.5 521.8L106.6 525.0L112.9 528.9L115.7 525.7zM659.6 867.1L657.3 871.6L666.1 877.2L668.4 872.6zM107.1 524.4L104.2 527.6L110.5 531.6L113.3 528.4zM657.7 870.9L655.4 875.4L664.2 881.0L666.5 876.4zM104.7 527.1L101.8 530.3L108.0 534.2L110.9 531.0zM655.8 874.6L653.5 879.2L666.3 887.3L668.6 882.8zM105.1 531.6L102.2 534.8L105.6 536.9L108.5 533.7zM653.8 878.4L651.5 883.0L664.4 891.2L666.7 886.6zM102.7 534.2L99.8 537.5L106.0 541.4L109.0 538.2zM655.9 884.8L653.6 889.4L662.5 895.0L664.8 890.4zM100.3 536.9L97.4 540.2L103.6 544.1L106.5 540.9zM366.3 705.9L363.7 709.7L374.5 716.7L377.2 712.8zM654.0 888.6L651.7 893.2L660.6 898.9L662.9 894.2zM100.7 541.4L97.8 544.7L101.2 546.9L104.1 543.6zM343.9 696.3L341.2 700.1L372.3 719.9L375.0 716.0zM652.1 892.4L649.8 897.0L662.7 905.3L665.0 900.7zM98.3 544.1L95.3 547.4L101.6 551.4L104.5 548.1zM338.3 697.3L335.6 701.1L353.1 712.3L355.8 708.4zM368.7 716.7L366.0 720.6L370.1 723.2L372.7 719.3zM654.2 898.8L651.9 903.5L660.8 909.2L663.1 904.5zM95.8 546.8L92.9 550.1L99.1 554.1L102.1 550.9zM336.1 700.5L333.4 704.4L340.7 709.1L343.4 705.2zM366.4 719.9L363.7 723.8L371.2 728.6L373.9 724.7zM640.2 895.0L637.8 899.6L663.0 915.7L665.3 911.0zM93.4 549.6L90.4 552.9L96.7 556.9L99.6 553.6zM333.8 703.7L331.1 707.6L338.5 712.3L341.2 708.4zM367.6 725.4L364.9 729.3L369.0 731.9L371.7 728.0zM626.2 891.1L623.8 895.7L652.9 914.4L655.2 909.7zM93.8 554.1L90.8 557.4L94.2 559.6L97.2 556.3zM334.9 709.1L332.1 712.9L336.2 715.5L338.9 711.7zM365.3 728.6L362.6 732.6L366.7 735.2L369.4 731.3zM608.3 884.7L605.8 889.3L634.7 907.9L637.0 903.2zM91.3 556.9L88.3 560.2L94.6 564.3L97.6 560.9zM332.6 712.3L329.9 716.2L333.9 718.8L336.6 714.9zM363.1 731.9L360.4 735.9L367.9 740.8L370.6 736.8zM590.4 878.4L588.0 882.9L616.6 901.4L619.0 896.7zM88.8 559.6L85.8 563.0L92.1 567.0L95.1 563.7zM330.3 715.5L327.6 719.4L335.0 724.2L337.7 720.3zM360.8 735.2L358.1 739.2L365.6 744.1L368.4 740.1zM576.6 874.6L574.2 879.1L606.6 900.1L609.0 895.5zM89.2 564.3L86.2 567.6L89.7 569.8L92.6 566.5zM328.0 718.8L325.2 722.7L332.7 727.5L335.4 723.6zM362.0 740.8L359.2 744.8L363.4 747.4L366.1 743.4zM562.9 870.8L560.4 875.3L584.7 891.1L587.2 886.5zM86.7 567.0L83.7 570.4L90.0 574.5L93.0 571.1zM325.7 722.0L322.9 726.0L330.4 730.8L333.1 726.9zM359.7 744.1L357.0 748.1L361.1 750.8L363.8 746.8zM545.3 864.5L542.8 869.0L570.8 887.2L573.3 882.6zM576.5 884.7L574.0 889.3L578.7 892.3L581.2 887.7zM84.2 569.8L81.2 573.2L87.5 577.3L90.5 573.9zM323.4 725.3L320.6 729.2L328.0 734.1L330.8 730.1zM360.9 749.7L358.1 753.7L362.3 756.4L365.0 752.4zM531.7 860.7L529.2 865.2L553.1 880.8L555.6 876.3zM81.7 572.6L78.7 576.0L87.9 582.0L90.9 578.6zM324.4 730.8L321.7 734.7L325.7 737.4L328.5 733.4zM358.6 753.0L355.8 757.1L360.0 759.8L362.7 755.7zM510.5 852.0L507.9 856.5L539.4 877.0L541.9 872.5zM82.1 577.3L79.1 580.7L82.5 582.9L85.5 579.5zM322.1 734.1L319.3 738.1L323.4 740.7L326.2 736.7zM500.8 850.8L498.2 855.2L525.7 873.2L528.2 868.7zM79.6 580.1L76.5 583.5L82.9 587.7L85.9 584.3zM319.8 737.4L317.0 741.4L321.1 744.1L323.9 740.1zM476.1 839.7L473.5 844.1L478.0 847.1L480.6 842.7zM483.6 844.6L481.0 849.1L508.2 867.0L510.8 862.5zM77.1 582.9L74.0 586.3L80.4 590.5L83.4 587.1zM470.2 841.0L467.5 845.4L490.8 860.7L493.4 856.2zM500.3 860.7L497.7 865.2L502.2 868.2L504.8 863.7zM74.5 585.8L71.5 589.2L77.8 593.4L80.9 589.9zM445.7 830.0L443.1 834.4L447.5 837.3L450.2 832.9zM453.1 834.8L450.4 839.2L481.1 859.4L483.7 855.0zM74.9 590.5L71.8 593.9L75.3 596.2L78.3 592.8zM439.8 831.2L437.1 835.6L460.1 850.8L462.8 846.3zM72.3 593.4L69.3 596.8L75.7 601.0L78.7 597.6zM422.9 825.1L420.2 829.5L446.7 847.1L449.4 842.6zM69.8 596.2L66.7 599.7L73.1 603.9L76.2 600.5zM409.8 821.5L407.0 825.9L429.7 840.9L432.4 836.5zM70.1 601.0L67.0 604.5L73.4 608.8L76.5 605.3zM393.0 815.5L390.3 819.8L416.4 837.2L419.1 832.9zM67.6 603.9L64.5 607.4L70.9 611.7L74.0 608.2zM380.0 812.0L377.2 816.2L399.5 831.2L402.3 826.8zM65.0 606.8L61.9 610.3L68.3 614.6L71.4 611.1zM363.4 806.0L360.6 810.3L382.7 825.1L385.5 820.8zM62.4 609.7L59.3 613.2L68.6 619.5L71.7 616.0zM346.9 800.1L344.1 804.3L373.2 823.9L376.0 819.6zM62.7 614.6L59.6 618.1L63.1 620.5L66.2 616.9zM330.5 794.2L327.7 798.4L353.0 815.5L355.9 811.2zM60.1 617.5L57.0 621.0L63.5 625.4L66.6 621.8zM321.2 793.0L318.3 797.3L340.0 811.9L342.9 807.6zM57.5 620.4L54.4 624.0L63.8 630.3L66.9 626.8zM304.9 787.2L302.0 791.4L323.6 806.0L326.5 801.7zM54.9 623.4L51.8 626.9L58.2 631.3L61.4 627.7zM292.2 783.7L289.3 787.9L310.7 802.4L313.6 798.2zM55.2 628.3L52.1 631.9L58.6 636.3L61.7 632.7zM276.1 777.9L273.1 782.1L294.4 796.5L297.3 792.3zM303.5 796.5L300.6 800.8L304.8 803.6L307.7 799.4zM52.6 631.3L49.5 634.9L55.9 639.3L59.1 635.7zM263.5 774.5L260.5 778.6L281.6 793.0L284.6 788.8zM50.0 634.3L46.8 637.9L53.3 642.3L56.4 638.7zM240.8 764.2L237.8 768.3L241.8 771.0L244.8 766.9zM247.5 768.8L244.5 772.9L265.5 787.2L268.4 783.0zM274.6 787.2L271.6 791.4L275.7 794.2L278.7 790.0zM47.3 637.3L44.2 640.9L50.6 645.3L53.8 641.7zM235.0 765.3L232.0 769.4L252.8 783.7L255.8 779.5zM47.6 642.3L44.5 645.9L50.9 650.4L54.1 646.7zM219.2 759.6L216.1 763.7L236.8 777.9L239.8 773.8zM45.0 645.3L41.8 648.9L48.3 653.4L51.5 649.8zM200.2 751.7L197.1 755.8L201.0 758.5L204.1 754.4zM206.7 756.2L203.7 760.3L224.2 774.4L227.3 770.3zM45.3 650.4L42.1 654.0L45.6 656.5L48.8 652.8zM191.1 750.6L188.0 754.7L208.4 768.7L211.4 764.6zM217.4 768.7L214.4 772.8L218.3 775.6L221.4 771.5zM39.7 651.4L36.4 655.0L45.9 661.6L49.1 657.9zM178.7 747.2L175.6 751.3L195.9 765.3L199.0 761.2zM39.9 656.4L36.7 660.1L43.2 664.6L46.4 660.9zM163.2 741.7L160.1 745.7L183.5 761.9L186.6 757.8zM37.2 659.5L34.0 663.2L43.5 669.8L46.7 666.1zM144.6 733.9L141.5 737.9L145.3 740.5L148.5 736.6zM151.0 738.3L147.9 742.3L167.9 756.2L171.0 752.2zM37.5 664.6L34.3 668.3L37.8 670.8L41.1 667.1zM129.3 728.4L126.1 732.3L129.9 735.0L133.1 731.0zM135.6 732.8L132.5 736.8L152.3 750.6L155.5 746.6zM158.0 748.3L154.9 752.4L158.8 755.1L161.9 751.0zM34.8 667.7L31.5 671.4L38.1 676.0L41.3 672.3zM123.5 729.5L120.3 733.4L140.0 747.2L143.2 743.2zM32.1 670.8L28.8 674.5L38.4 681.2L41.6 677.5zM108.3 724.0L105.1 727.9L124.6 741.6L127.8 737.6zM32.3 676.0L29.1 679.7L32.7 682.3L35.9 678.5zM96.2 720.7L93.0 724.6L112.5 738.3L115.7 734.3zM26.6 677.0L23.4 680.8L32.9 687.5L36.2 683.7zM81.2 715.3L77.9 719.2L100.3 735.0L103.6 731.0zM26.9 682.2L23.6 686.0L30.2 690.7L33.5 686.9zM63.1 707.7L59.8 711.6L63.5 714.2L66.8 710.3zM69.2 712.0L66.0 715.9L85.1 729.4L88.4 725.5zM24.1 685.4L20.8 689.2L27.4 693.8L30.7 690.0zM48.2 702.4L44.9 706.2L70.0 724.0L73.3 720.0zM24.4 690.7L21.1 694.5L24.7 697.0L28.0 693.2zM42.4 703.4L39.1 707.3L58.0 720.7L61.3 716.8zM21.6 693.8L18.3 697.6L43.1 715.2L46.4 711.4zM18.9 697.0L15.5 700.8L31.2 712.0L34.5 708.1z"/><polygon points="540.5,869.0 547.0,867.5 644.5,906.5 647.5,916.0 643.0,919.5" fill="#7d7d7d"/><polygon points="643.5,912.0 647.5,917.0 704.0,710.0 701.8,700.0 699.0,703.0" fill="#6f6f6f"/><path d="M359.0 800.2L447.0 835.3L540.0 873.6L602.0 900.0" fill="none" stroke="#f4ec12" stroke-width="3.9" stroke-linecap="round" stroke-dasharray="0 2.5"/><path d="M602.0 900.0L643.7 918.8" fill="none" stroke="#f4ec12" stroke-width="3.2" stroke-linecap="round" stroke-dasharray="0 5.0"/><path d="M644.0 910.0L653.0 873.0L667.0 818.0L681.0 768.0L690.5 736.0L699.3 703.8" fill="none" stroke="#f4ec12" stroke-width="2.6" stroke-linecap="round" stroke-dasharray="0 2.7"/><path d="M607.1 629.4L602.5 632.0" fill="none" stroke="#f4ec12" stroke-width="4.6" stroke-linecap="round" stroke-dasharray="0 4.2"/><path d="M598.4 635.5L593.6 641.0L591.3 646.5L589.8 655.5L591.1 664.9L596.4 675.5L603.1 684.9L611.1 691.6L621.8 696.9L628.0 698.0" fill="none" stroke="#f4ec12" stroke-width="4.8" stroke-linecap="round" stroke-dasharray="0 2.7"/><path d="M679.4 362.2L704.5 371.0" fill="none" stroke="#f4ec12" stroke-width="3.4" stroke-linecap="round" stroke-dasharray="0 2.75"/><path d="M609.3 420.8L627.4 427.0" fill="none" stroke="#f4ec12" stroke-width="3.3" stroke-linecap="round" stroke-dasharray="0 2.7"/><polygon points="625.8,663.5 645.6,670.4 640.0,684.0 628.5,697.8 608.8,689.0" fill="#03036e"/><path d="M643.0 676.8L648.5 675.3" stroke="#3434a8" stroke-width="1"/><path d="M640.5 683.2L645.5 682.3" stroke="#3434a8" stroke-width="1"/><path d="M637.0 690.0L641.5 689.4" stroke="#3434a8" stroke-width="1"/><path d="M632.0 696.2L638.0 695.6" stroke="#3434a8" stroke-width="1"/><path d="M609 690.5Q617 699 629 699.5" stroke="#b9b4ee" stroke-width="1.300" fill="none"/><path d="M244.5 579.2L406.0 531.0" stroke="#9a9a72" stroke-width="1.050" fill="none"/><path d="M244.5 579.2L406.0 531.0" stroke="#ddd65e" stroke-width="1.050" stroke-dasharray="1.600 1.600" fill="none"/><path d="M246.5 582.0L423.5 676.9" stroke="#45455e" stroke-width="1.050" fill="none"/><path d="M246.5 582.0L423.5 676.9" stroke="#f2ea3c" stroke-width="1.050" stroke-dasharray="1.600 1.600" fill="none"/><path d="M240.6 578.3L229.2 570.6" stroke="#00e400" stroke-width="1.5" stroke-linecap="round"/><path d="M240.6 578.3L250.5 567.9" stroke="#f50000" stroke-width="1.5" stroke-linecap="round"/><path d="M240.6 578.3L239.6 571.6" stroke="#1010d0" stroke-width="1.5" stroke-linecap="round"/><polygon points="241.5,579.0 247.6,580.3 246.3,583.0" fill="#e0208c"/><path d="M410.9 528.9L404.0 538.8" stroke="#00e400" stroke-width="1.5" stroke-linecap="round"/><path d="M410.9 528.9L398.8 521.4" stroke="#f50000" stroke-width="1.5" stroke-linecap="round"/><path d="M410.9 528.9L411.9 521.4" stroke="#1010d0" stroke-width="1.5" stroke-linecap="round"/><polygon points="411.0,529.0 405.6,529.2 406.2,531.8" fill="#e0208c"/><circle cx="434.2" cy="679.7" r="2.3" fill="#f6f0b0" opacity="0.8"/><circle cx="427.9" cy="688.3" r="2.5" fill="#f4eea8" opacity="0.85"/><circle cx="423.4" cy="684.6" r="1.3" fill="#f2ecb0" opacity="0.8"/><circle cx="428.8" cy="684.8" r="1.9" fill="#f4f4f0" opacity="0.9"/><circle cx="429.2" cy="668.6" r="1.9" fill="#161616"/><circle cx="427.8" cy="671.2" r="1.2" fill="#2a2a2a"/><circle cx="428.0" cy="676.0" r="2.6" fill="#2c2c2c"/><circle cx="429.6" cy="677.8" r="1.7" fill="#161616"/><circle cx="424.4" cy="679.6" r="2.1" fill="#353535"/><circle cx="422.6" cy="682.4" r="2.0" fill="#262626"/><circle cx="424.6" cy="683.3" r="1.4" fill="#151515"/><circle cx="419.2" cy="686.6" r="2.2" fill="#1a1a1a"/><circle cx="420.6" cy="689.4" r="1.1" fill="#2b2b2b"/><circle cx="417.5" cy="685.8" r="1.1" fill="#222"/><circle cx="429.4" cy="673.8" r="1.25" fill="#1a1ac8"/><circle cx="426.2" cy="674.6" r="0.8" fill="#e8e8e8"/><circle cx="424.2" cy="675.2" r="0.7" fill="#d8d8d8"/><circle cx="423.8" cy="678.2" r="0.6" fill="#e0e0e0"/><circle cx="426.6" cy="678.6" r="0.55" fill="#d0d0d0"/><circle cx="418.4" cy="695.6" r="0.5" fill="#e6e6e6"/><path d="M430.6 680.7L441.6 687.6" stroke="#f20a12" stroke-width="1.450" stroke-linecap="round"/><path d="M432.2 673.8L436.6 666.6" stroke="#10dc18" stroke-width="1.450" stroke-linecap="round"/></svg>
<svg style="left:145px;top:678px" width="495" height="371" viewBox="145 678 495 371"><defs><linearGradient id="sky" x1="0" y1="0" x2="0" y2="1"><stop offset="0" stop-color="#dadada"/><stop offset="1" stop-color="#dddddd"/></linearGradient><linearGradient id="flr" x1="0" y1="0" x2="0" y2="1"><stop offset="0" stop-color="#bfbfbf"/><stop offset="1" stop-color="#c5c5c5"/></linearGradient><linearGradient id="rw" x1="0" y1="0" x2="1" y2="0"><stop offset="0" stop-color="#858585"/><stop offset="1" stop-color="#7d7d7d"/></linearGradient></defs><rect x="145" y="678" width="495" height="371" fill="url(#flr)"/><rect x="145" y="678" width="495" height="168.20000000000005" fill="url(#sky)"/><polygon points="145,846.200 532.600,846.200 532.600,886.900 400,889.600 166,894 145,894.500" fill="#484848"/><polygon points="532.300,846 640,844.100 640,905.800 532.300,886.900" fill="url(#rw)"/><path d="M145 901.800C185 901 232 901.200 255 904.600C272 907 280 910 278.600 913.400C276 918.500 250 924.500 215 930C190 933.600 165 935.600 145 936.500z" fill="#5c5c5c"/><path d="M145 695C152 697.500 159 702 162 708.500L163.500 760 165.200 850 166.200 911.300C160 914 152 916 145 917z" fill="#020266"/></svg>
</body></html>
